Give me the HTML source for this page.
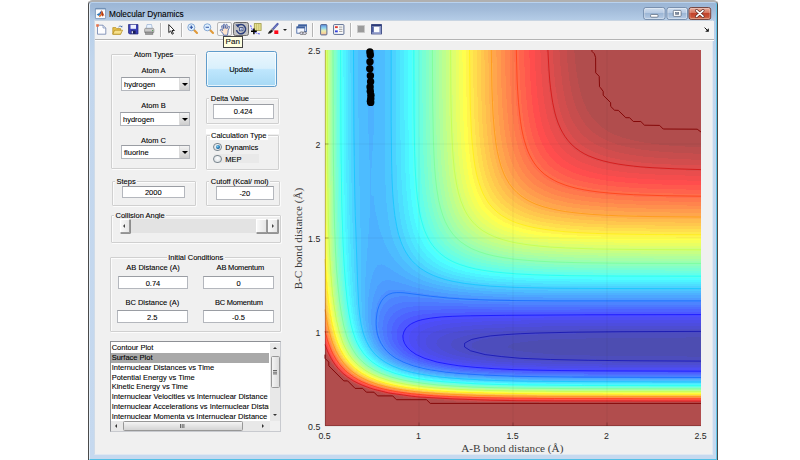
<!DOCTYPE html>
<html><head><meta charset="utf-8"><title>Molecular Dynamics</title>
<style>
html,body{margin:0;padding:0;background:#fff;}
body{width:800px;height:460px;position:relative;overflow:hidden;font-family:"Liberation Sans",sans-serif;font-size:7.5px;color:#000;-webkit-text-stroke:0.09px #000;}
*{box-sizing:border-box;}
.abs,.win *{position:absolute;}
.win{position:absolute;left:88px;top:0px;width:630px;height:461px;border-radius:4.5px 4.5px 0 0;background:linear-gradient(#9ab5d5 0,#a3bcda 8px,#b6cee8 19px,#c2d6ed 60px,#c6d9ef 100%);border:1px solid #4a4a4a;border-top:2px solid #b0b0b0;overflow:hidden;}
.win .glow{left:0;top:0;width:628px;height:458px;border-left:1px solid #e6f0fa;border-top:1px solid #b9d2ee;border-right:1px solid #62c6ea;border-bottom:1px solid #53c0e6;border-radius:3px 3px 0 0;}
.title{left:20px;top:7px;font-size:8.3px;line-height:10px;white-space:nowrap;color:#000;}
.client{left:5px;top:18.3px;width:619px;height:435px;background:#f0f0f0;border:1px solid #cfdbe8;border-top-color:#c9d5e2;border-bottom-color:#dfe8f2;border-right-color:#dfe8f2;}
.tbline{left:0;top:17.7px;width:619px;height:1px;background:#b4b4b4;}
.tbline2{left:0;top:18.7px;width:619px;height:1px;background:#fff;}
.lbl{white-space:nowrap;line-height:9px;height:9px;}
.c{text-align:center;}
.panel{border:1px solid #d0d0d0;box-shadow:0.7px 0.7px 0 #fff, inset 0.7px 0.7px 0 #fff;border-radius:1px;}
.ptitle{background:#f0f0f0;padding:0 1.5px;white-space:nowrap;line-height:9px;height:9px;}
.edit{background:#fff;border:1px solid #b4b7bd;border-top-color:#9a9da3;text-align:center;line-height:11px;}
.combo{background:#fff;border:1px solid #b4b7bd;border-top-color:#9a9da3;}
.combo .t{left:2px;top:2.5px;line-height:9px;}
.combo .b{right:0.3px;top:0.3px;bottom:0.3px;width:10px;background:linear-gradient(#f3f3f3,#e2e2e2 45%,#cdcdcd 100%);border-left:0.6px solid #dcdcdc;}
.combo .b:after{content:"";position:absolute;left:1.9px;top:4.9px;width:0;height:0;border-style:solid;border-width:3.2px 3px 0 3px;border-color:#000 transparent transparent transparent;}
.plot{position:absolute;}
.tick{white-space:nowrap;line-height:10px;font-size:8.8px;color:#262626;-webkit-text-stroke:0;}
.axl{font-family:"Liberation Serif",serif;font-size:11.2px;white-space:nowrap;line-height:13px;color:#3a3a3a;-webkit-text-stroke:0;}
.li{left:0px;white-space:nowrap;line-height:9.65px;height:9.65px;padding-left:1.2px;}
.sb{background:#e8e8e8;}
.thumb{background:linear-gradient(90deg,#f4f4f4,#dcdcdc);border:1px solid #979797;border-radius:1.5px;}
.thumbh{background:linear-gradient(#f4f4f4,#d4d4d4);border:1px solid #979797;border-radius:1.5px;}
svg{overflow:visible}
.pt{position:static !important;padding:0 1.5px;}
.btn{border:1px solid #5f9ccb;border-radius:2.5px;background:linear-gradient(#eaf6fd 0,#d9f0fc 48%,#bee6fd 52%,#a7d9f5 100%);box-shadow:inset 0 0 0 0.8px #fafdfe;}
.radio{border-radius:50%;border:0.9px solid #7b8790;background:radial-gradient(circle at 50% 40%,#fdfdfd 0,#e3e7ea 60%,#cfd5d9 100%);}
.rdot{left:1.7px;top:1.7px;width:3.8px;height:3.8px;border-radius:50%;background:radial-gradient(circle at 40% 35%,#7fd0f5 0,#1a6aa6 60%,#123c63 100%);}
.sbtn{background:linear-gradient(90deg,#f8f8f8,#e6e6e6);border:0.8px solid #9a9a9a;border-left-color:#fff;border-top-color:#fff;box-shadow:0.6px 0.6px 0 #555;}
.arl{left:2.6px;top:3.8px;width:0;height:0;border-style:solid;border-width:2.4px 2.8px 2.4px 0;border-color:transparent #444 transparent transparent;}
.arr{left:4.2px;top:3.8px;width:0;height:0;border-style:solid;border-width:2.4px 0 2.4px 2.8px;border-color:transparent transparent transparent #444;}
.list{background:#fff;border:1px solid #8e9095;border-bottom-color:#c8cacf;border-right-color:#c8cacf;overflow:hidden;}
.ar{border:2.3px solid transparent;}
.ar2{border:2.3px solid transparent;}

</style></head>
<body>
<div class="win">
<div class="glow"></div>
<svg class="abs" style="left:6.2px;top:5.7px" width="11" height="11" viewBox="0 0 11 11"><rect x="0.4" y="0.4" width="10.2" height="10.2" rx="0.6" fill="#fbfcfd" stroke="#6f8db3" stroke-width="0.8"/><path d="M0.4 0.9H10.6" stroke="#5f82ad" stroke-width="0.9"/><path d="M1.6 6.5L4.3 4.9 5.6 6.2 3.8 8Z" fill="#2f78b7"/><path d="M3.8 8L5.6 6.2 6.7 2.2 7.4 3.6 6.9 7.2 5.9 7.9 4.9 9.2Z" fill="#e3691f"/><path d="M6.7 2.2Q7.9 4.2 9.4 7.9L8.3 7.3 7.6 8.8 6.9 7.2Z" fill="#b23a16"/><path d="M4.3 4.9L6.7 2.2 5.6 6.2Z" fill="#3b4d8f"/></svg>
<div class="title">Molecular Dynamics</div>
<!-- caption buttons -->
<svg class="abs" style="left:553px;top:4px" width="72" height="16" viewBox="0 0 72 16">
<defs>
<linearGradient id="cb1" x1="0" y1="0" x2="0" y2="1"><stop offset="0" stop-color="#d3e0f0"/><stop offset="0.48" stop-color="#b4c8e2"/><stop offset="0.5" stop-color="#9db7d6"/><stop offset="1" stop-color="#b9cde6"/></linearGradient>
<linearGradient id="cb2" x1="0" y1="0" x2="0" y2="1"><stop offset="0" stop-color="#e9b3a3"/><stop offset="0.46" stop-color="#d5735c"/><stop offset="0.5" stop-color="#c2432b"/><stop offset="0.8" stop-color="#c9553a"/><stop offset="1" stop-color="#de8a66"/></linearGradient>
</defs>
<rect x="1.7" y="1.5" width="21.3" height="12" rx="2.2" fill="url(#cb1)" stroke="#6c84a5" stroke-width="0.9"/>
<rect x="2.6" y="2.4" width="19.5" height="10.2" rx="1.5" fill="none" stroke="#fff" stroke-opacity="0.55" stroke-width="0.7"/>
<rect x="25" y="1.5" width="20.5" height="12" rx="2.2" fill="url(#cb1)" stroke="#6c84a5" stroke-width="0.9"/>
<rect x="25.9" y="2.4" width="18.7" height="10.2" rx="1.5" fill="none" stroke="#fff" stroke-opacity="0.55" stroke-width="0.7"/>
<rect x="47" y="1.5" width="21.7" height="12" rx="2.2" fill="url(#cb2)" stroke="#6b3530" stroke-width="0.9"/>
<rect x="47.9" y="2.4" width="19.9" height="10.2" rx="1.5" fill="none" stroke="#fff" stroke-opacity="0.4" stroke-width="0.7"/>
<rect x="8.6" y="8.4" width="7.4" height="2.8" rx="0.9" fill="#fff" stroke="#4c5a70" stroke-width="0.7"/>
<rect x="31.3" y="4.4" width="7.8" height="6" rx="0.9" fill="#fff" stroke="#4c5a70" stroke-width="0.7"/>
<rect x="33.6" y="6.6" width="3.2" height="1.7" fill="#7c8aa0" stroke="#4c5a70" stroke-width="0.5"/>
<path d="M54.6 4.6L61 10.4M61 4.6L54.6 10.4" stroke="#5a2a24" stroke-width="3" stroke-linecap="round"/>
<path d="M54.6 4.6L61 10.4M61 4.6L54.6 10.4" stroke="#fff" stroke-width="1.7" stroke-linecap="round"/>
</svg>
<div class="client">
<div style="left:0;top:0;width:619px;height:17.7px;background:#f3f3f3"></div><div class="tbline"></div><div class="tbline2"></div>
<svg class="abs" style="left:1.2px;top:2.5px" width="11" height="11" viewBox="0 0 11 11"><path d="M1.5 1.2H7L9.8 4V10.2H1.5Z" fill="#fdfdff" stroke="#7b8cb3" stroke-width="0.9"/><path d="M7 1.2V4H9.8" fill="#dfe6f5" stroke="#7b8cb3" stroke-width="0.7"/><path d="M0.2 0.2h2.6v2.6h-2.6z" fill="#e8734a"/></svg>
<svg class="abs" style="left:16.8px;top:3.5px" width="11" height="10" viewBox="0 0 11 10"><path d="M0.8 9.2V2.6H3.8L4.8 3.6H8.6V9.2Z" fill="#e9c24b" stroke="#b18a1c" stroke-width="0.7"/><path d="M0.8 9.2L2.6 5.2H10.6L8.6 9.2Z" fill="#f7e08a" stroke="#b18a1c" stroke-width="0.7"/><path d="M6.5 2C7.5 0.8 9 0.8 9.8 1.8" fill="none" stroke="#3b62a8" stroke-width="0.8"/><path d="M10.4 0.6L10.2 2.6 8.6 1.8Z" fill="#3b62a8"/></svg>
<svg class="abs" style="left:33.05px;top:2.85px" width="10.5" height="10.5" viewBox="0 0 10.5 10.5"><path d="M0.5 0.5H10V10H1.5L0.5 9Z" fill="#3a3fb5" stroke="#23267a" stroke-width="0.7"/><rect x="2.5" y="0.8" width="5.5" height="4" fill="#eef0ff"/><rect x="3" y="6.6" width="4.6" height="3.2" fill="#1b1d55"/><rect x="3.6" y="7.2" width="1.4" height="2.2" fill="#dfe3ff"/></svg>
<svg class="abs" style="left:48.95px;top:2.8px" width="10.5" height="11" viewBox="0 0 10.5 11"><path d="M3 0.5H7.5L8.3 4.5H2.2Z" fill="#e9f3ff" stroke="#8aa5c9" stroke-width="0.6"/><path d="M0.6 5.5Q0.6 4.3 1.8 4.3H8.7Q9.9 4.3 9.9 5.5V8.4H0.6Z" fill="#c9c9c9" stroke="#777" stroke-width="0.6"/><rect x="1.6" y="8" width="7.3" height="2.4" fill="#9a9a9a" stroke="#666" stroke-width="0.5"/><rect x="8" y="6.2" width="1.1" height="0.9" fill="#3c9a3c"/></svg>
<div style="left:64.7px;top:1.7px;width:0.8px;height:14px;background:#b4b4b4;box-shadow:0.8px 0 0 #fff"></div>
<svg class="abs" style="left:73.3px;top:3.1px" width="7" height="11" viewBox="0 0 7 11"><path d="M0.8 0.6V8.6L2.7 6.9 4.1 10.2 5.4 9.6 4 6.5H6.4Z" fill="#fff" stroke="#111" stroke-width="0.9" stroke-linejoin="round"/></svg>
<div style="left:86px;top:1.7px;width:0.8px;height:14px;background:#b4b4b4;box-shadow:0.8px 0 0 #fff"></div>
<svg class="abs" style="left:92px;top:2.2px" width="11" height="11" viewBox="0 0 11 11"><path d="M6.3 6.3L10 10" stroke="#e09a3a" stroke-width="2.1" stroke-linecap="round"/><circle cx="4.3" cy="4.3" r="3.5" fill="#dff0ff" stroke="#7aa0d0" stroke-width="0.9"/><path d="M2.6 4.3H6" stroke="#2b4fa0" stroke-width="1.1"/><path d="M4.3 2.6V6" stroke="#2b4fa0" stroke-width="1.1"/></svg>
<svg class="abs" style="left:107.8px;top:2.2px" width="11" height="11" viewBox="0 0 11 11"><path d="M6.3 6.3L10 10" stroke="#e09a3a" stroke-width="2.1" stroke-linecap="round"/><circle cx="4.3" cy="4.3" r="3.5" fill="#dff0ff" stroke="#7aa0d0" stroke-width="0.9"/><path d="M2.6 4.3H6" stroke="#2b4fa0" stroke-width="1.1"/></svg>
<div style="left:122.2px;top:1.1px;width:14.6px;height:13.4px;border:0.8px solid #b9b9b9;border-radius:2px;background:#f6f6f6"></div>
<svg class="abs" style="left:123.7px;top:1.95px" width="12" height="12.5" viewBox="0 0 12 12.5"><path d="M4.6 12.2C4.2 10.4 3 9.2 1.6 8 0.6 7.1 1.4 6 2.5 6.7L3.6 7.6 2.6 3.6C2.3 2.5 3.6 2.1 3.9 3.2L4.6 5.6 4.4 1.8C4.4 0.7 5.8 0.7 5.8 1.8L6.2 5.4 6.9 2C7.1 0.9 8.5 1.2 8.3 2.3L7.8 5.8 9.3 3.6C9.9 2.7 11 3.4 10.5 4.3L9.2 7.2C9 9.2 8.8 10.6 8.4 12.2Z" fill="#fde3cb" stroke="#3457a6" stroke-width="0.75" stroke-linejoin="round"/></svg>
<div style="left:137.9px;top:1px;width:15.8px;height:13.6px;border:1px solid #6e6e6e;border-radius:2.5px;background:#c2c2c2"></div>
<svg class="abs" style="left:139.8px;top:1.6px" width="12" height="12" viewBox="0 0 12 12"><path d="M2.3 3.4A4.6 4.6 0 1 1 1.5 7.2" fill="none" stroke="#2b3f7c" stroke-width="1.5"/><path d="M0.3 1.6L4.1 1.3 3.4 5Z" fill="#2b3f7c"/><rect x="4.6" y="4.6" width="3.4" height="3.2" fill="#e8eefb" stroke="#2b3f7c" stroke-width="0.8"/><path d="M5.5 5.6H7.1V6.9H5.5Z" fill="#7f93c6"/></svg>
<svg class="abs" style="left:155px;top:1.7px" width="12" height="12" viewBox="0 0 12 12"><rect x="4.3" y="0.6" width="6.8" height="6.8" fill="#e6df8e" stroke="#9b9742" stroke-width="0.8"/><path d="M6.5 0.8V7.2M8.7 0.8V7.2" stroke="#b9b25e" stroke-width="0.6"/><path d="M0.7 2.4Q1.6 6.6 4 8.6T10.6 11" fill="none" stroke="#2424ee" stroke-width="0.9" stroke-dasharray="1.8 1.1"/><path d="M3.9 5.4V11.2M1 8.3H6.8" stroke="#000" stroke-width="1.5"/></svg>
<svg class="abs" style="left:171.6px;top:1.7px" width="12" height="12" viewBox="0 0 12 12"><path d="M10.6 1L5.6 6.6" stroke="#5560b0" stroke-width="2.2" stroke-linecap="round"/><path d="M9.9 1.9L6.4 5.8" stroke="#aab3e6" stroke-width="0.6" stroke-dasharray="0.8 0.8"/><path d="M5.9 6.1L4.3 7.9" stroke="#8d8d8d" stroke-width="2.4"/><path d="M4.9 7.1Q2.2 7.4 0.8 10.8Q4.2 10.9 5.8 8.2Z" fill="#1c1c1c"/><rect x="7.3" y="7.4" width="4" height="3.6" fill="#ff0818"/></svg>
<div style="left:188.3px;top:7.3px;border:2px solid transparent;border-top:2.4px solid #222;border-bottom:0"></div>
<div style="left:195.8px;top:1.7px;width:0.8px;height:14px;background:#b4b4b4;box-shadow:0.8px 0 0 #fff"></div>
<svg class="abs" style="left:200.85px;top:2.25px" width="11.5" height="11.5" viewBox="0 0 11.5 11.5"><rect x="2.6" y="0.8" width="8" height="6.6" fill="#f2f6ff" stroke="#3c5f9e" stroke-width="0.8"/><rect x="2.6" y="0.8" width="8" height="1.6" fill="#3c5f9e"/><rect x="0.8" y="2.8" width="8" height="6.4" fill="#f2f6ff" stroke="#3c5f9e" stroke-width="0.8"/><rect x="0.8" y="2.8" width="8" height="1.6" fill="#3c5f9e"/><ellipse cx="5.6" cy="9.2" rx="1.9" ry="1.3" fill="#dde" stroke="#555" stroke-width="0.7"/><ellipse cx="8.6" cy="9.2" rx="1.9" ry="1.3" fill="#dde" stroke="#555" stroke-width="0.7"/></svg>
<div style="left:217px;top:1.7px;width:0.8px;height:14px;background:#b4b4b4;box-shadow:0.8px 0 0 #fff"></div>
<svg class="abs" style="left:224.85px;top:2.25px" width="7.5" height="11.5" viewBox="0 0 7.5 11.5"><defs><linearGradient id="cbg" x1="0" y1="0" x2="0" y2="1"><stop offset="0" stop-color="#5d8be0"/><stop offset="0.35" stop-color="#8fd6ee"/><stop offset="0.6" stop-color="#e8eeb0"/><stop offset="0.8" stop-color="#f6d79a"/><stop offset="1" stop-color="#eeb9a6"/></linearGradient></defs><rect x="0.6" y="0.6" width="6.3" height="10.3" rx="0.8" fill="url(#cbg)" stroke="#4a5c86" stroke-width="0.9"/></svg>
<svg class="abs" style="left:238.45px;top:2.5px" width="11.5" height="11" viewBox="0 0 11.5 11"><rect x="0.6" y="0.6" width="10.3" height="9.8" rx="0.8" fill="#fbfbfb" stroke="#4a5c86" stroke-width="0.9"/><rect x="2" y="2.2" width="2.8" height="1.9" fill="#e03a30"/><rect x="2" y="6.4" width="2.8" height="1.9" fill="#3340d8"/><path d="M6 3.1H9.4M6 5.3H9.4M6 7.4H9.4" stroke="#777" stroke-width="0.7"/></svg>
<div style="left:255.3px;top:1.7px;width:0.8px;height:14px;background:#b4b4b4;box-shadow:0.8px 0 0 #fff"></div>
<svg class="abs" style="left:262px;top:4.1px" width="8" height="8" viewBox="0 0 8 8"><rect x="0.5" y="0.5" width="7" height="7" fill="#9b9b9b" stroke="#c8c8c8" stroke-width="0.8"/></svg>
<svg class="abs" style="left:276.1px;top:2.75px" width="11" height="10.5" viewBox="0 0 11 10.5"><rect x="0.6" y="0.6" width="9.8" height="9.3" fill="#fafcff" stroke="#2b3a78" stroke-width="0.9"/><rect x="0.6" y="0.6" width="9.8" height="1.9" fill="#2b3a78"/><rect x="1" y="2.5" width="1.8" height="7" fill="#4a5aa0"/><rect x="8.4" y="2.5" width="1.6" height="7" fill="#8a96c8"/><rect x="1" y="8.2" width="9" height="1.4" fill="#8a96c8"/></svg>
<svg class="abs" style="left:608.8px;top:6px" width="5" height="5" viewBox="0 0 5 5"><path d="M0.6 0.6L3.8 3.8" stroke="#111" stroke-width="1"/><path d="M4.8 1.2V4.8H1.2Z" fill="#111"/></svg>
<div style="left:128.1px;top:14.9px;width:19.6px;height:11.8px;background:#ffffe1;border:0.9px solid #444;z-index:5"></div>
<div class="lbl" style="left:130.6px;top:15.9px;font-size:8px;line-height:10px;z-index:6;color:#111">Pan</div>
<div class="panel" style="left:16.3px;top:32.5px;width:84.7px;height:115.4px;"></div><div class="lbl c" style="left:16.3px;top:28.5px;width:84.7px;"><span class="pt" style="background:#f0f0f0">Atom Types</span></div>
<div class="lbl c" style="left:13.5px;top:45px;width:90px;">Atom A</div>
<div class="combo" style="left:26px;top:55.7px;width:69px;height:14.3px;"><div class="t">hydrogen</div><div class="b"></div></div>
<div class="lbl c" style="left:13.5px;top:79.5px;width:90px;">Atom B</div>
<div class="combo" style="left:25px;top:90.7px;width:70px;height:14.3px;"><div class="t">hydrogen</div><div class="b"></div></div>
<div class="lbl c" style="left:13.5px;top:115px;width:90px;">Atom C</div>
<div class="combo" style="left:26px;top:123.7px;width:69px;height:14.5px;"><div class="t">fluorine</div><div class="b"></div></div>
<div class="btn" style="left:110.5px;top:29.7px;width:71.5px;height:36px;"><div class="lbl c" style="left:0;top:12.9px;width:100%">Update</div></div>
<div class="panel" style="left:111.3px;top:76.7px;width:72.5px;height:25.8px;"></div><div class="lbl" style="left:114.25px;top:72.7px;"><span class="pt" style="background:#f0f0f0">Delta Value</span></div>
<div class="edit" style="left:117.5px;top:82.5px;width:61.3px;height:15px;line-height:14.2px">0.424</div>
<div class="" style="left:111px;top:107.5px;width:73.3px;height:5.7px;background:#fff"></div>
<div class="panel" style="left:111.3px;top:113.5px;width:72.7px;height:35px;"></div><div class="lbl" style="left:114.5px;top:109.5px;"><span class="pt" style="background:#fff">Calculation Type</span></div>
<div class="radio" style="left:118.4px;top:121.4px;width:8.2px;height:8.2px"><div class="rdot"></div></div>
<div class="lbl" style="left:130.3px;top:121.8px;">Dynamics</div>
<div class="" style="left:118.8px;top:132.7px;width:45px;height:9.3px;background:#e9e9e9"></div>
<div class="radio" style="left:118.4px;top:133.8px;width:8.2px;height:8.2px"></div>
<div class="lbl" style="left:130.3px;top:134.2px;">MEP</div>
<div class="panel" style="left:16.8px;top:160px;width:84px;height:24.7px;"></div><div class="lbl" style="left:20px;top:156px;"><span class="pt" style="background:#f0f0f0">Steps</span></div>
<div class="edit" style="left:27px;top:165px;width:62.5px;height:12px;line-height:11.2px">2000</div>
<div class="panel" style="left:110.5px;top:160px;width:74.5px;height:25px;"></div><div class="lbl" style="left:114.25px;top:156px;"><span class="pt" style="background:#f0f0f0">Cutoff (Kcal/ mol)</span></div>
<div class="edit" style="left:120.8px;top:164.5px;width:58px;height:14.2px;line-height:13.4px">-20</div>
<div class="panel" style="left:15.5px;top:193.7px;width:170px;height:28px;"></div><div class="lbl" style="left:19px;top:189.7px;"><span class="pt" style="background:#f0f0f0">Collision Angle</span></div>
<div class="" style="left:24.5px;top:198.2px;width:158.5px;height:13.5px;background:#e3e3e3"></div>
<div class="sbtn" style="left:24.5px;top:198.2px;width:10.3px;height:13.5px;"><div class="arl"></div></div>
<div class="sbtn" style="left:172.3px;top:198.2px;width:10.7px;height:13.5px;"><div class="arr"></div></div>
<div class="sbtn" style="left:161.3px;top:198.2px;width:11px;height:13.5px;"></div>
<div class="panel" style="left:15px;top:235.7px;width:171.3px;height:75px;"></div><div class="lbl c" style="left:15px;top:231.7px;width:171.3px;"><span class="pt" style="background:#f0f0f0">Initial Conditions</span></div>
<div class="lbl c" style="left:13px;top:242px;width:90px;">AB Distance (A)</div>
<div class="lbl c" style="left:100.3px;top:242px;width:90px;letter-spacing:-0.2px">AB Momentum</div>
<div class="edit" style="left:23px;top:255px;width:70px;height:12.5px;line-height:13.9px">0.74</div>
<div class="edit" style="left:108.3px;top:255px;width:70.5px;height:12.5px;line-height:13.9px">0</div>
<div class="lbl c" style="left:12.3px;top:277px;width:90px;">BC Distance (A)</div>
<div class="lbl c" style="left:98.8px;top:277px;width:90px;letter-spacing:-0.2px">BC Momentum</div>
<div class="edit" style="left:22px;top:288.7px;width:70.5px;height:13px;line-height:13.4px">2.5</div>
<div class="edit" style="left:108.3px;top:288.7px;width:70.5px;height:13px;line-height:13.4px">-0.5</div>
<div class="list" style="left:14.5px;top:320px;width:171px;height:90.7px;"><div class="li" style="top:1.2px;width:158px;overflow:hidden;">Contour Plot</div><div class="li" style="top:10.95px;width:158px;overflow:hidden;background:#a9a9a9;">Surface Plot</div><div class="li" style="top:20.7px;width:158px;overflow:hidden;">Internuclear Distances vs Time</div><div class="li" style="top:30.45px;width:158px;overflow:hidden;">Potential Energy vs Time</div><div class="li" style="top:40.2px;width:158px;overflow:hidden;">Kinetic Energy vs Time</div><div class="li" style="top:49.95px;width:158px;overflow:hidden;">Internuclear Velocities vs Internuclear Distance</div><div class="li" style="top:59.7px;width:158px;overflow:hidden;">Internuclear Accelerations vs Internuclear Distance</div><div class="li" style="top:69.45px;width:158px;overflow:hidden;">Internuclear Momenta vs Internuclear Distance</div><div class="sb" style="left:159.2px;top:0.5px;width:10.8px;height:78px"></div><div class="ar" style="left:162.4px;top:5px;border-bottom:2.6px solid #333;border-top:0"></div><div class="ar" style="left:162.4px;top:72px;border-top:2.6px solid #333;border-bottom:0"></div><div class="thumb" style="left:160px;top:13.5px;width:9.5px;height:32.5px"></div><div style="left:162.8px;top:27.5px;width:4px;height:0.8px;background:#666;box-shadow:0 1.7px 0 #666,0 3.4px 0 #666"></div><div class="sb" style="left:0.5px;top:78.3px;width:158.7px;height:11px"></div><div style="left:159.2px;top:78.3px;width:10.8px;height:11px;background:#f0f0f0"></div><div class="ar2" style="left:4.5px;top:81.3px;border-right:2.6px solid #333;border-left:0"></div><div class="ar2" style="left:151.5px;top:81.3px;border-left:2.6px solid #333;border-right:0"></div><div class="thumbh" style="left:12px;top:79px;width:120px;height:9.8px"></div><div style="left:69.8px;top:82px;width:0.8px;height:4px;background:#666;box-shadow:1.7px 0 0 #666,3.4px 0 0 #666"></div></div>
</div>
</div>
<svg class="plot" style="left:324.5px;top:50.0px" width="376" height="376" viewBox="0 0 376 376">
<g shape-rendering="crispEdges">
<rect x="0" y="0" width="376" height="376" fill="#4d4db1"/>
<path d="M0.9 376.0L376.0 376.0L376.0 306.6L289.5 306.0L255.7 305.3L230.5 304.6L210.6 302.9L191.4 300.8L181.8 297.0L188.3 293.3L205.9 291.1L225.2 289.5L251.9 288.7L282.0 288.1L376.0 287.4L376.0 0.0L0.0 0.0L0.0 376.0L0.9 376.0Z" fill="#4d4dbc"/>
<path d="M0.9 376.0L376.0 376.0L376.0 310.2L270.7 309.5L233.1 308.8L210.6 308.0L188.0 306.4L169.8 304.6L153.1 300.8L146.6 297.0L147.3 293.3L151.3 291.5L156.6 289.5L172.0 287.1L188.0 285.6L218.1 284.3L255.7 283.4L304.6 282.9L376.0 282.6L376.0 0.0L0.0 0.0L0.0 376.0L0.9 376.0Z" fill="#4d4dc7"/>
<path d="M0.9 376.0L376.0 376.0L376.0 312.9L297.0 312.6L245.8 312.1L206.8 310.9L188.0 309.9L173.0 308.8L165.4 308.1L150.4 305.8L143.5 304.6L139.1 303.2L132.1 300.8L126.8 297.0L125.8 293.3L129.4 289.5L135.4 287.2L140.1 285.8L148.5 284.3L157.9 283.1L175.8 281.6L206.8 280.3L244.4 279.6L297.0 279.1L376.0 278.8L376.0 0.0L0.0 0.0L0.0 376.0L0.9 376.0Z" fill="#4d4dd2"/>
<path d="M0.9 376.0L376.0 376.0L376.0 315.0L297.0 314.7L244.4 314.2L203.0 313.2L184.2 312.4L173.0 311.7L157.9 310.2L143.1 308.3L126.9 304.6L117.9 300.8L113.0 297.0L111.3 293.3L112.6 289.5L114.7 287.8L117.7 285.8L124.1 283.5L129.6 282.0L139.1 280.5L150.4 279.2L161.7 278.3L191.8 277.0L233.1 276.2L289.5 275.8L376.0 275.5L376.0 0.0L0.0 0.0L0.0 376.0L0.9 376.0Z" fill="#4d4dde"/>
<path d="M0.9 376.0L376.0 376.0L376.0 316.9L282.0 316.6L221.8 315.9L188.0 314.7L157.9 312.7L146.6 311.5L127.8 308.4L114.7 304.6L107.1 300.8L102.6 297.0L100.5 293.3L100.6 289.5L103.1 285.8L105.3 284.2L109.1 282.0L116.6 279.6L122.5 278.2L133.5 276.7L146.6 275.5L173.0 274.2L218.1 273.2L282.0 272.7L376.0 272.5L376.0 0.0L0.0 0.0L0.0 376.0L0.9 376.0Z" fill="#4d4de9"/>
<path d="M0.9 376.0L376.0 376.0L376.0 318.5L282.0 318.2L221.8 317.5L199.3 316.9L176.7 316.1L165.4 315.4L150.4 314.1L133.6 312.1L124.1 310.2L115.7 308.3L105.1 304.6L98.4 300.8L94.2 297.0L92.0 293.3L91.3 289.5L92.5 285.8L94.9 282.8L95.7 282.0L97.8 280.7L102.5 278.2L109.0 276.2L116.6 274.6L124.7 273.5L136.3 272.5L165.4 271.1L206.8 270.3L274.5 269.9L376.0 269.6L376.0 0.0L0.0 0.0L0.0 376.0L0.9 376.0Z" fill="#4d4df4"/>
<path d="M0.9 376.0L376.0 376.0L376.0 320.0L278.2 319.8L225.6 319.2L180.5 317.8L161.7 316.8L148.2 315.8L135.4 314.3L121.0 312.1L106.4 308.3L101.5 306.4L97.3 304.6L91.2 300.8L90.2 299.9L87.3 297.0L84.9 293.3L83.8 289.5L84.1 285.8L85.8 282.0L89.5 278.2L94.0 275.7L97.8 274.1L105.3 272.2L113.9 270.7L124.1 269.7L135.4 269.0L150.4 268.4L191.8 267.7L263.2 267.2L376.0 266.9L376.0 0.0L0.0 0.0L0.0 376.0L0.9 376.0Z" fill="#4d4dff"/>
<path d="M0.9 376.0L376.0 376.0L376.0 321.3L267.0 321.0L203.0 320.1L184.3 319.6L165.4 318.6L146.6 317.3L132.4 315.8L120.3 313.9L111.2 312.1L98.8 308.3L90.6 304.6L85.1 300.8L81.3 297.0L78.8 293.3L77.6 289.5L77.3 285.8L78.1 282.0L80.1 278.2L84.1 274.5L87.4 272.5L91.6 270.7L97.8 269.0L105.3 267.7L116.6 266.6L139.1 265.6L180.5 265.0L259.4 264.5L376.0 264.3L376.0 0.0L0.0 0.0L0.0 376.0L0.9 376.0Z" fill="#4d58ff"/>
<path d="M0.9 376.0L376.0 376.0L376.0 322.6L270.7 322.3L206.8 321.5L180.5 320.7L157.9 319.7L146.6 318.8L131.6 317.3L120.3 315.8L103.1 312.1L92.3 308.3L86.5 305.4L84.9 304.6L79.7 300.8L76.1 297.0L73.7 293.3L72.2 289.5L71.5 285.8L71.7 282.0L72.8 278.2L75.0 274.5L79.0 270.7L84.1 267.9L86.5 266.9L90.2 265.8L97.8 264.4L105.3 263.6L122.2 262.7L150.4 262.4L376.0 261.8L376.0 0.0L0.0 0.0L0.0 376.0L0.9 376.0Z" fill="#4d63ff"/>
<path d="M0.9 376.0L376.0 376.0L376.0 323.8L259.4 323.5L203.0 322.7L176.7 321.9L154.2 320.7L138.7 319.6L124.1 317.8L111.4 315.8L96.3 312.1L86.6 308.3L79.8 304.6L75.0 300.8L71.5 297.0L69.1 293.3L67.4 289.5L66.6 285.8L66.4 282.0L66.8 278.2L67.7 275.2L68.5 273.5L70.2 270.7L71.4 269.2L75.2 266.0L79.0 263.9L83.8 262.3L90.2 260.9L97.8 260.1L109.0 259.6L124.1 259.4L199.3 259.6L376.0 259.3L376.0 0.0L0.0 0.0L0.0 376.0L0.9 376.0Z" fill="#4d6eff"/>
<path d="M0.9 376.0L376.0 376.0L376.0 324.8L263.2 324.5L195.5 323.7L176.7 323.1L157.9 322.2L139.1 320.9L124.1 319.3L105.3 316.2L97.8 314.3L90.2 312.0L81.6 308.3L79.0 306.8L75.3 304.6L71.4 301.4L67.4 297.0L65.0 293.3L63.3 289.5L62.2 285.8L61.7 282.0L61.7 278.2L62.0 276.2L62.3 274.5L63.5 270.7L65.5 267.0L68.7 263.2L72.4 260.6L75.2 259.2L77.1 258.5L82.7 257.1L90.2 256.2L105.3 255.9L154.2 256.7L199.3 257.1L376.0 257.0L376.0 0.0L0.0 0.0L0.0 376.0L0.9 376.0Z" fill="#4d79ff"/>
<path d="M0.9 376.0L376.0 376.0L376.0 325.9L259.4 325.5L191.8 324.6L154.2 323.2L135.4 321.8L116.1 319.6L105.3 317.6L97.0 315.8L86.5 312.5L77.2 308.3L71.3 304.6L66.9 300.8L63.7 297.0L61.3 293.3L59.5 289.5L58.4 285.8L57.7 282.0L57.4 278.2L57.8 272.6L59.1 267.0L60.8 263.2L63.9 258.8L67.7 255.7L71.4 253.9L75.2 252.8L79.0 252.1L82.7 251.8L94.0 251.7L140.1 253.6L184.2 254.5L240.6 254.7L376.0 254.6L376.0 0.0L0.0 0.0L0.0 376.0L0.9 376.0Z" fill="#4d84ff"/>
<path d="M0.9 376.0L376.0 376.0L376.0 326.9L255.7 326.6L218.1 326.2L188.0 325.6L161.7 324.6L139.5 323.4L124.1 321.8L107.9 319.6L91.3 315.8L82.7 312.9L79.0 311.3L73.1 308.3L67.6 304.6L63.4 300.8L60.3 297.0L57.9 293.3L56.4 290.1L54.9 285.8L54.0 282.0L53.5 278.2L53.4 274.5L53.6 270.7L54.1 267.0L55.2 262.3L56.2 259.4L57.1 257.6L60.2 252.9L63.9 249.6L67.7 247.8L71.4 246.8L75.2 246.4L79.0 246.3L86.5 246.7L113.1 249.1L131.6 250.4L150.4 251.2L171.1 251.7L233.1 252.3L376.0 252.3L376.0 0.0L0.0 0.0L0.0 376.0L0.9 376.0Z" fill="#4d8fff"/>
<path d="M0.9 376.0L376.0 376.0L376.0 327.8L248.2 327.5L213.1 327.1L184.2 326.5L154.2 325.3L131.6 323.8L116.6 322.1L101.5 319.7L86.5 315.9L79.0 313.1L76.4 312.1L69.4 308.3L63.9 304.3L60.2 300.8L57.2 297.0L54.9 293.3L53.0 289.5L51.7 285.8L50.8 282.0L50.1 278.2L49.7 270.7L50.2 263.2L51.1 258.5L52.6 252.8L54.9 248.2L56.4 245.6L60.2 242.1L63.9 240.3L67.7 239.6L71.4 239.5L75.2 239.8L103.4 244.4L120.3 246.4L139.1 247.9L161.7 248.9L188.0 249.6L225.6 249.9L376.0 250.0L376.0 0.0L0.0 0.0L0.0 376.0L0.9 376.0Z" fill="#4d9bff"/>
<path d="M0.9 376.0L376.0 376.0L376.0 328.7L248.2 328.3L206.8 327.9L176.7 327.2L154.2 326.3L131.6 324.7L117.3 323.4L101.5 320.9L95.0 319.6L86.5 317.3L81.7 315.8L75.2 313.2L72.6 312.1L66.1 308.3L60.2 303.7L57.3 300.8L54.3 297.0L52.0 293.3L50.2 289.5L48.8 285.8L47.0 278.2L46.5 274.5L46.1 267.0L46.5 259.4L47.3 252.9L48.9 245.3L50.2 241.6L52.6 236.1L54.3 234.1L56.4 231.9L60.2 230.3L63.9 230.1L67.7 230.7L91.7 237.8L100.6 239.9L109.0 241.5L117.5 242.8L127.8 244.1L150.4 245.8L180.5 247.0L218.1 247.5L376.0 247.7L376.0 0.0L0.0 0.0L0.0 376.0L0.9 376.0Z" fill="#4da6ff"/>
<path d="M0.9 376.0L376.0 376.0L376.0 329.5L244.4 329.2L203.0 328.7L173.0 328.0L150.4 327.1L127.8 325.4L109.3 323.4L94.0 320.5L89.7 319.6L79.0 316.3L69.2 312.1L62.9 308.3L58.2 304.6L54.5 300.8L51.6 297.0L49.3 293.3L47.6 289.5L45.0 282.0L44.2 278.2L43.2 270.7L42.8 259.4L43.4 248.2L44.6 237.8L45.9 231.2L47.9 223.7L48.9 220.8L50.8 217.8L52.6 215.3L56.4 214.4L60.2 215.7L73.3 224.0L80.8 228.2L87.4 231.2L93.1 233.4L102.5 236.2L112.8 238.6L124.1 240.5L137.2 242.0L150.4 243.1L165.4 243.9L184.2 244.6L206.8 245.0L263.2 245.4L376.0 245.5L376.0 0.0L0.0 0.0L0.0 376.0L0.9 376.0Z" fill="#4db1ff"/>
<path d="M0.9 376.0L376.0 376.0L376.0 330.4L270.7 330.2L206.8 329.6L161.7 328.4L139.1 327.3L127.8 326.4L112.8 324.8L102.5 323.4L86.5 320.0L79.0 317.6L71.4 314.8L65.9 312.1L63.9 310.8L60.0 308.3L56.4 305.3L51.9 300.8L49.1 297.0L46.9 293.3L45.1 289.5L42.5 282.0L41.4 276.9L40.4 270.7L39.6 259.4L39.5 248.2L40.0 235.9L41.4 212.2L44.1 176.7L44.8 161.7L45.1 146.6L45.0 131.6L44.6 112.8L41.4 27.5L41.1 0.0L0.0 0.0L0.0 376.0L0.9 376.0ZM199.3 242.5L259.4 243.1L376.0 243.2L376.0 0.0L49.8 0.0L48.9 78.1L45.7 131.6L45.5 139.1L45.6 141.9L46.0 143.8L46.5 144.8L47.7 145.7L48.9 146.2L49.4 154.2L50.4 161.7L51.2 165.4L52.6 170.2L53.9 176.7L55.0 180.5L59.1 191.8L62.1 198.3L65.3 204.0L69.6 210.0L73.3 214.3L77.2 218.1L81.9 221.8L87.8 225.6L93.3 228.4L99.6 231.0L107.2 233.5L114.7 235.4L123.1 237.1L131.6 238.4L142.9 239.7L167.3 241.5L199.3 242.5Z" fill="#4dbcff"/>
<path d="M0.9 376.0L376.0 376.0L376.0 331.2L263.2 331.0L206.8 330.4L161.7 329.3L142.9 328.4L124.9 327.1L109.0 325.3L97.8 323.6L90.2 322.0L80.8 319.6L70.4 315.8L63.9 312.6L57.3 308.3L53.0 304.6L49.5 300.8L46.8 297.0L44.6 293.3L41.3 285.8L40.2 282.0L38.5 274.5L37.4 267.0L36.8 259.4L36.2 244.4L35.7 185.2L33.8 107.4L33.0 0.0L0.0 0.0L0.0 376.0L0.9 376.0ZM228.4 240.6L282.0 240.9L376.0 241.0L376.0 0.0L59.8 0.0L59.7 71.4L59.8 105.3L60.5 135.4L61.6 154.2L63.4 169.2L64.7 176.7L66.4 184.2L68.7 191.8L70.1 195.5L73.3 202.1L76.1 206.8L79.7 211.5L83.7 215.7L88.4 219.7L93.1 222.8L98.0 225.6L105.3 228.8L112.7 231.2L120.3 233.2L128.8 234.9L139.1 236.5L150.4 237.7L161.7 238.6L191.8 240.0L228.4 240.6Z" fill="#4dc7ff"/>
<path d="M0.9 376.0L376.0 376.0L376.0 331.9L267.0 331.7L203.0 331.2L161.7 330.1L142.9 329.2L127.8 328.2L115.9 327.1L97.8 324.5L90.2 323.1L79.0 320.2L75.2 319.0L67.7 316.0L63.9 314.1L60.1 312.1L54.8 308.3L52.6 306.4L50.6 304.6L47.3 300.8L44.6 297.0L41.4 291.1L39.2 285.8L37.6 280.5L36.2 274.5L35.0 267.0L33.8 255.7L32.9 236.9L30.1 146.6L29.2 82.7L28.7 0.0L0.0 0.0L0.0 376.0L0.9 376.0ZM201.2 237.8L259.4 238.6L376.0 238.7L376.0 0.0L65.8 0.0L65.8 63.9L66.0 101.5L66.6 127.8L67.6 146.6L68.5 157.9L69.4 165.4L70.6 173.0L72.2 180.5L73.6 186.1L75.5 191.8L77.5 196.5L80.3 202.1L83.4 206.8L86.4 210.6L90.0 214.3L94.6 218.1L100.4 221.8L105.3 224.4L110.9 226.7L117.5 228.9L124.1 230.7L131.6 232.3L139.1 233.5L150.4 234.9L173.0 236.7L201.2 237.8Z" fill="#4dd2ff"/>
<path d="M0.9 376.0L376.0 376.0L376.0 332.6L270.7 332.4L206.8 331.9L160.1 330.9L131.6 329.3L108.4 327.1L94.0 324.8L86.6 323.4L82.7 322.4L73.4 319.6L64.2 315.8L57.5 312.1L52.4 308.3L48.3 304.6L45.1 300.8L42.5 297.0L40.4 293.3L37.6 286.9L36.0 282.0L33.8 273.1L32.3 263.2L31.2 251.9L30.1 236.2L28.8 206.8L27.5 173.0L26.6 139.1L25.8 82.7L25.4 0.0L0.0 0.0L0.0 376.0L0.9 376.0ZM223.7 236.0L278.2 236.4L376.0 236.5L376.0 0.0L70.8 0.0L70.8 60.2L71.1 97.8L71.8 127.8L73.1 149.5L74.9 165.4L76.1 173.0L77.8 180.5L79.9 187.6L81.4 191.8L84.5 198.3L87.3 203.0L90.0 206.8L93.3 210.6L97.4 214.3L102.6 218.1L109.0 221.7L113.7 223.7L120.3 226.1L127.8 228.2L135.4 229.9L144.8 231.4L154.2 232.6L165.4 233.6L191.8 235.1L223.7 236.0Z" fill="#4ddeff"/>
<path d="M0.9 376.0L376.0 376.0L376.0 333.3L270.7 333.1L210.6 332.7L161.7 331.6L143.1 330.9L131.6 330.1L116.6 328.8L101.9 327.1L90.2 325.0L82.3 323.4L70.1 319.6L61.5 315.8L55.1 312.1L50.1 308.3L46.2 304.6L43.1 300.8L41.4 298.3L38.4 293.3L35.3 285.8L33.0 278.2L31.4 270.7L30.1 262.3L29.0 251.9L27.8 236.9L26.3 213.7L25.1 184.2L24.2 154.2L23.2 90.2L22.7 0.0L0.0 0.0L0.0 376.0L0.9 376.0ZM262.3 234.1L376.0 234.3L376.0 0.0L75.2 0.0L75.3 63.9L75.6 101.5L76.4 127.8L77.9 150.4L79.2 161.7L80.4 169.2L82.0 176.7L84.1 184.2L86.1 189.9L88.7 195.5L91.4 200.2L94.8 204.9L98.7 209.2L102.5 212.6L107.2 215.9L112.8 219.1L118.9 221.8L126.9 224.5L134.6 226.5L142.9 228.2L150.4 229.4L161.7 230.7L173.0 231.6L188.0 232.5L218.1 233.5L262.3 234.1Z" fill="#4de9ff"/>
<path d="M0.9 376.0L376.0 376.0L376.0 334.1L270.7 333.9L206.8 333.4L161.7 332.3L142.9 331.6L127.8 330.7L112.8 329.2L97.8 327.3L90.2 326.0L78.5 323.4L67.0 319.6L60.2 316.5L52.7 312.1L48.0 308.3L44.2 304.6L41.1 300.8L38.7 297.0L36.6 293.3L33.4 285.8L31.2 278.2L29.5 270.7L27.8 259.4L26.3 246.3L24.8 225.6L23.5 203.0L22.6 182.3L21.9 157.9L20.9 94.0L20.5 0.0L0.0 0.0L0.0 376.0L0.9 376.0ZM221.8 231.2L274.5 231.9L376.0 232.0L376.0 0.0L79.3 0.0L79.4 56.4L79.7 94.0L80.4 120.3L81.6 142.9L83.7 161.7L85.1 169.2L86.8 176.7L88.7 183.3L90.5 188.0L92.1 191.8L95.2 197.4L99.2 203.0L102.7 206.8L106.9 210.6L110.9 213.4L115.6 216.2L120.3 218.5L127.8 221.3L133.5 223.0L142.9 225.2L150.4 226.5L169.2 228.7L191.8 230.2L221.8 231.2Z" fill="#4df4ff"/>
<path d="M0.9 376.0L376.0 376.0L376.0 334.7L267.0 334.6L203.0 334.0L157.9 332.9L139.1 332.1L121.0 330.9L105.3 329.2L94.0 327.6L86.5 326.1L74.9 323.4L64.2 319.6L56.4 315.8L50.6 312.1L46.0 308.3L41.4 303.4L36.9 297.0L33.2 289.5L30.5 282.0L28.6 274.5L26.5 263.2L23.9 240.6L22.6 223.8L21.4 203.0L20.3 176.7L19.6 150.4L18.8 97.8L18.4 0.0L0.0 0.0L0.0 376.0L0.9 376.0ZM249.1 229.4L297.0 229.7L376.0 229.8L376.0 0.0L83.1 0.0L83.3 60.2L83.7 97.8L84.5 124.1L86.0 145.7L88.1 161.7L89.5 169.2L91.4 176.7L93.2 182.4L95.4 188.0L98.7 194.3L102.0 199.3L105.2 203.0L109.0 206.8L113.9 210.6L120.3 214.3L126.0 216.9L131.6 219.0L139.1 221.2L146.3 222.8L154.2 224.2L163.6 225.5L184.2 227.3L210.6 228.6L249.1 229.4Z" fill="#4dffff"/>
<path d="M0.9 376.0L376.0 376.0L376.0 335.4L263.2 335.2L197.8 334.6L154.2 333.5L135.4 332.6L120.3 331.5L105.3 330.0L90.2 327.8L82.7 326.2L71.6 323.4L61.5 319.6L54.2 315.8L48.5 312.1L44.1 308.3L40.5 304.6L37.6 300.8L35.2 297.0L33.2 293.3L30.1 285.8L26.9 274.5L25.4 267.0L23.7 255.7L22.1 240.6L20.6 221.8L19.3 199.3L18.6 184.2L17.9 157.9L17.0 97.8L16.6 0.0L0.0 0.0L0.0 376.0L0.9 376.0ZM345.0 227.5L376.0 227.5L376.0 0.0L86.8 0.0L87.0 63.9L87.6 101.5L88.6 127.8L89.4 139.1L90.6 150.4L92.2 161.7L93.8 169.2L95.8 176.7L98.6 184.2L101.5 190.3L104.7 195.5L108.1 199.8L112.8 204.5L116.6 207.5L122.2 211.0L128.8 214.2L135.4 216.7L142.9 218.9L152.2 220.9L161.7 222.5L173.0 223.8L184.2 224.8L197.6 225.6L229.4 226.7L274.5 227.3L345.0 227.5Z" fill="#58fff4"/>
<path d="M0.9 376.0L376.0 376.0L376.0 336.0L259.4 335.7L195.5 335.2L154.2 334.2L135.4 333.3L120.3 332.2L106.0 330.9L90.2 328.5L82.6 327.1L68.6 323.4L59.0 319.6L52.6 316.2L46.5 312.1L42.2 308.3L37.6 303.1L33.5 297.0L29.9 289.5L27.3 282.0L26.2 278.2L24.6 270.7L22.6 259.4L21.2 248.2L19.7 233.1L18.8 221.5L17.6 199.3L16.7 176.7L16.0 150.4L15.2 90.2L14.9 0.0L0.0 0.0L0.0 376.0L0.9 376.0ZM247.2 224.7L297.0 225.1L376.0 225.2L376.0 0.0L90.4 0.0L90.6 56.4L91.0 90.2L91.8 116.6L93.2 139.1L94.5 150.4L95.6 157.9L97.1 165.4L98.7 171.7L100.6 177.7L103.2 184.2L105.1 188.0L108.1 192.7L111.7 197.4L115.4 201.2L119.4 204.5L124.1 207.7L129.4 210.6L135.4 213.1L142.9 215.6L150.4 217.5L157.9 219.0L167.3 220.4L176.7 221.5L188.0 222.5L214.3 223.9L247.2 224.7Z" fill="#63ffe9"/>
<path d="M0.9 376.0L376.0 376.0L376.0 336.6L263.2 336.4L199.3 335.9L150.4 334.7L120.3 332.9L105.3 331.5L94.0 330.0L79.0 327.1L71.4 325.1L65.8 323.4L56.4 319.5L48.9 315.2L44.6 312.1L41.4 309.2L37.1 304.6L34.3 300.8L30.1 293.4L28.4 289.5L25.8 282.0L23.9 274.5L22.3 267.0L20.6 255.7L18.8 240.8L17.3 221.8L16.0 199.3L14.9 173.0L13.8 109.0L13.4 0.0L0.0 0.0L0.0 376.0L0.9 376.0ZM298.0 222.8L376.0 222.9L376.0 0.0L93.9 0.0L94.1 56.4L94.6 94.0L95.6 120.3L96.3 131.6L97.4 142.9L98.7 152.6L100.2 160.7L101.9 168.3L103.6 173.9L106.2 180.5L109.0 186.1L112.6 191.8L115.6 195.5L119.4 199.3L124.1 203.0L130.2 206.8L135.4 209.3L142.9 212.1L150.4 214.3L157.9 216.0L167.3 217.6L176.7 218.8L188.0 219.9L214.3 221.4L248.2 222.3L298.0 222.8Z" fill="#6effde"/>
<path d="M0.9 376.0L376.0 376.0L376.0 337.2L263.2 337.0L199.3 336.5L150.4 335.3L135.3 334.6L120.3 333.6L105.3 332.2L94.8 330.9L82.7 328.7L75.4 327.1L71.4 326.0L63.1 323.4L54.4 319.6L47.9 315.8L41.4 310.8L37.6 307.0L35.5 304.6L32.8 300.8L30.1 296.2L27.0 289.5L24.4 282.0L22.4 274.5L20.2 263.2L18.8 253.7L16.7 233.1L15.0 211.4L13.4 169.2L12.3 105.3L11.9 0.0L0.0 0.0L0.0 376.0L0.9 376.0ZM250.0 220.0L297.0 220.4L376.0 220.6L376.0 0.0L97.3 0.0L97.5 52.6L97.9 87.4L98.8 112.8L100.3 135.4L102.2 150.4L103.5 157.9L105.3 165.4L107.2 171.6L109.0 176.7L112.2 183.3L115.1 188.0L117.9 191.8L121.4 195.5L125.7 199.3L131.2 203.0L137.2 206.2L142.9 208.6L148.7 210.6L155.1 212.3L162.6 213.9L171.1 215.3L180.5 216.5L191.8 217.6L218.1 219.1L250.0 220.0Z" fill="#79ffd2"/>
<path d="M0.9 376.0L376.0 376.0L376.0 337.8L267.0 337.6L203.0 337.1L157.9 336.2L124.1 334.6L105.3 332.8L90.2 330.9L82.7 329.5L72.2 327.1L60.6 323.4L52.6 319.8L46.0 315.8L41.1 312.1L37.2 308.3L33.8 304.4L30.1 298.8L26.3 291.3L24.2 285.8L22.0 278.2L19.5 267.0L17.7 255.7L15.6 236.9L14.3 221.8L12.9 195.5L11.9 169.2L11.3 139.7L10.9 109.0L10.5 0.0L0.0 0.0L0.0 376.0L0.9 376.0ZM295.2 218.1L376.0 218.3L376.0 0.0L100.7 0.0L100.9 52.6L101.5 90.2L102.5 116.6L103.3 127.8L104.4 139.1L105.8 149.5L107.3 157.0L109.0 164.3L110.9 170.1L113.5 176.7L115.9 181.4L119.6 187.1L123.1 191.4L127.4 195.5L132.4 199.3L138.2 202.7L142.9 204.8L150.4 207.6L157.4 209.6L165.4 211.4L173.0 212.7L181.4 213.9L191.8 214.9L218.1 216.6L251.9 217.6L295.2 218.1Z" fill="#84ffc7"/>
<path d="M0.9 376.0L376.0 376.0L376.0 338.4L263.2 338.2L199.3 337.7L150.4 336.5L131.6 335.6L116.6 334.6L101.5 333.1L86.5 331.0L79.0 329.5L69.2 327.1L58.2 323.4L50.3 319.6L44.2 315.8L39.5 312.1L35.6 308.3L33.8 306.2L30.1 301.1L26.3 294.3L24.3 289.5L21.7 282.0L18.9 270.7L17.0 259.4L15.4 248.2L13.9 233.1L12.3 210.6L11.3 190.7L10.6 169.2L9.7 105.3L9.3 0.0L0.0 0.0L0.0 376.0L0.9 376.0ZM257.6 215.3L304.6 215.7L376.0 215.9L376.0 0.0L104.0 0.0L104.2 52.6L104.8 86.5L105.8 112.8L107.2 131.6L108.4 141.9L109.6 149.5L111.2 157.0L112.6 162.6L114.8 169.2L116.6 173.6L120.1 180.5L122.6 184.2L125.6 188.0L129.3 191.8L133.8 195.5L139.1 198.9L144.8 201.8L150.4 204.1L157.9 206.5L162.8 207.7L169.2 209.1L178.6 210.7L188.0 211.8L199.3 212.9L225.6 214.4L257.6 215.3Z" fill="#8fffbc"/>
<path d="M0.9 376.0L376.0 376.0L376.0 338.9L259.4 338.7L195.5 338.2L169.2 337.7L146.6 336.9L127.8 336.0L112.8 334.9L97.8 333.3L82.7 331.0L75.2 329.4L66.4 327.1L55.9 323.4L48.9 319.9L42.5 315.8L37.9 312.1L34.1 308.3L30.1 303.1L26.4 297.0L23.0 289.5L20.5 282.0L18.5 274.5L16.3 263.2L14.6 251.9L12.6 233.1L11.3 215.6L10.3 195.5L9.4 169.2L8.4 105.3L8.0 0.0L0.0 0.0L0.0 376.0L0.9 376.0ZM312.1 213.4L376.0 213.5L376.0 0.0L107.3 0.0L107.6 52.6L108.1 86.5L109.2 112.8L110.1 124.1L111.2 135.4L112.9 146.6L114.4 154.2L116.4 161.7L118.4 167.3L120.8 173.0L124.1 179.0L127.8 184.2L131.2 188.0L135.4 191.8L140.8 195.5L146.6 198.7L151.3 200.7L157.9 203.1L165.4 205.2L173.1 206.8L184.2 208.6L203.2 210.6L229.4 212.0L263.2 212.9L312.1 213.4Z" fill="#9bffb1"/>
<path d="M0.9 376.0L376.0 376.0L376.0 339.4L255.7 339.2L188.0 338.6L146.6 337.5L127.8 336.6L112.8 335.5L97.8 334.0L82.7 331.7L75.2 330.2L63.8 327.1L53.8 323.4L46.5 319.6L40.8 315.8L36.4 312.1L32.7 308.3L29.7 304.6L27.2 300.8L25.1 297.0L21.8 289.5L18.8 280.5L16.5 270.7L15.0 263.2L13.0 248.2L11.3 232.0L10.1 214.3L8.9 191.8L8.1 165.4L7.2 105.3L6.9 0.0L0.0 0.0L0.0 376.0L0.9 376.0ZM269.8 210.6L312.1 211.0L376.0 211.1L376.0 0.0L110.6 0.0L110.9 48.9L111.4 82.7L112.5 109.0L114.0 127.8L115.3 138.2L116.6 146.0L118.4 154.2L119.7 158.9L121.9 165.4L124.1 170.4L127.5 176.7L130.2 180.5L133.3 184.2L137.2 188.0L142.1 191.8L146.7 194.6L151.3 196.9L157.9 199.5L165.4 201.9L173.0 203.7L180.5 205.1L191.8 206.7L210.6 208.4L236.9 209.8L269.8 210.6Z" fill="#a6ffa6"/>
<path d="M0.9 376.0L376.0 376.0L376.0 339.9L259.4 339.7L191.8 339.2L150.4 338.3L131.6 337.4L112.8 336.1L97.7 334.6L82.7 332.3L75.0 330.9L61.3 327.1L51.8 323.4L45.1 319.8L39.3 315.8L34.9 312.1L30.1 306.8L25.9 300.8L22.1 293.3L19.2 285.8L17.1 278.2L15.0 269.4L13.3 259.4L11.3 243.9L9.7 225.6L8.5 206.8L7.5 186.1L7.0 165.4L6.1 101.5L5.8 0.0L0.0 0.0L0.0 376.0L0.9 376.0ZM254.7 207.7L300.8 208.4L376.0 208.7L376.0 0.0L113.9 0.0L114.1 45.1L114.7 79.0L115.7 105.3L117.2 124.1L119.1 139.1L120.5 146.6L122.3 154.2L124.1 159.8L126.3 165.4L128.5 170.1L131.9 175.8L135.5 180.5L139.1 184.2L142.9 187.4L146.6 190.1L150.4 192.3L157.2 195.5L162.3 197.4L169.2 199.5L176.7 201.3L184.2 202.7L191.8 203.8L203.0 205.1L225.6 206.7L254.7 207.7Z" fill="#b1ff9b"/>
<path d="M0.9 376.0L376.0 376.0L376.0 340.4L259.4 340.3L191.8 339.7L142.9 338.5L127.8 337.8L112.8 336.7L94.0 334.8L82.7 333.0L72.0 330.9L60.2 327.5L49.9 323.4L45.1 320.8L43.0 319.6L37.7 315.8L33.8 312.5L30.0 308.3L27.1 304.6L24.7 300.8L22.6 296.9L18.8 287.9L15.9 278.2L14.2 270.7L11.6 255.7L10.3 244.4L8.9 229.4L7.5 210.5L6.6 188.0L5.9 165.4L5.1 101.5L4.7 0.0L0.0 0.0L0.0 376.0L0.9 376.0ZM295.2 205.9L376.0 206.2L376.0 0.0L117.2 0.0L117.5 48.9L118.2 82.7L119.4 109.0L121.2 127.8L122.2 135.4L123.8 143.8L125.3 150.4L127.6 157.9L130.3 164.5L132.7 169.2L135.4 173.5L139.1 178.3L142.9 182.1L146.6 185.2L150.6 188.0L157.6 191.8L163.6 194.2L169.2 196.1L176.7 198.1L184.2 199.6L191.8 200.8L203.0 202.3L225.6 204.0L255.7 205.2L295.2 205.9Z" fill="#bcff8f"/>
<path d="M0.9 376.0L376.0 376.0L376.0 341.0L259.4 340.8L195.5 340.3L150.4 339.3L128.7 338.4L116.6 337.6L101.5 336.2L88.5 334.6L79.0 333.0L67.7 330.5L56.7 327.1L48.0 323.4L41.4 319.6L36.2 315.8L33.8 313.7L30.1 309.9L25.9 304.6L21.5 297.0L18.3 289.5L15.0 279.1L13.1 270.7L11.1 259.4L9.2 244.4L7.5 226.6L6.5 210.6L5.5 188.0L4.9 165.4L4.0 101.5L3.7 0.0L0.0 0.0L0.0 376.0L0.9 376.0ZM275.4 203.1L315.8 203.5L376.0 203.7L376.0 0.0L120.5 0.0L120.8 45.1L121.4 79.0L122.7 105.3L124.3 124.1L125.4 131.6L126.9 140.1L128.3 146.6L130.6 154.2L132.7 159.8L135.3 165.4L137.6 169.2L140.2 173.0L143.3 176.7L147.2 180.5L152.1 184.2L157.0 187.2L161.7 189.5L167.2 191.8L173.0 193.6L180.5 195.6L188.0 197.2L199.3 198.9L218.1 200.8L244.4 202.2L275.4 203.1Z" fill="#c7ff84"/>
<path d="M0.9 376.0L376.0 376.0L376.0 341.5L263.2 341.3L199.3 340.8L150.4 339.8L131.6 339.1L116.6 338.2L101.5 336.8L86.5 334.9L75.2 332.9L66.4 330.9L54.7 327.1L46.2 323.4L39.8 319.6L33.8 315.0L30.1 311.3L27.5 308.3L24.7 304.6L22.3 300.8L20.4 297.0L17.2 289.5L14.8 282.0L11.3 267.0L9.6 255.7L7.7 240.6L6.5 225.6L5.3 206.8L4.4 184.2L3.8 162.7L3.1 101.5L2.8 0.0L0.0 0.0L0.0 376.0L0.9 376.0ZM266.0 200.2L308.3 200.9L376.0 201.1L376.0 0.0L123.8 0.0L124.1 45.1L124.7 75.2L125.9 101.5L127.5 120.3L128.5 127.8L130.0 136.3L131.4 142.9L133.5 150.4L135.6 156.0L138.1 161.7L140.2 165.4L142.6 169.2L145.6 173.0L149.3 176.7L153.8 180.5L157.9 183.2L161.7 185.3L167.5 188.0L173.0 190.0L180.5 192.2L188.0 193.9L195.5 195.3L214.3 197.6L236.9 199.2L266.0 200.2Z" fill="#d2ff79"/>
<path d="M0.9 376.0L376.0 376.0L376.0 342.0L259.4 341.8L195.5 341.3L146.6 340.2L127.8 339.4L112.5 338.4L97.8 336.9L82.7 334.9L75.2 333.5L63.8 330.9L52.6 327.1L45.1 323.7L38.3 319.6L33.4 315.8L29.5 312.1L26.2 308.3L23.5 304.6L19.3 297.0L16.2 289.5L13.8 282.0L11.1 270.7L9.1 259.4L7.2 244.4L5.8 229.4L4.7 214.3L3.4 184.2L2.7 154.2L2.2 116.6L1.8 0.0L0.0 0.0L0.0 376.0L0.9 376.0ZM321.5 198.3L376.0 198.5L376.0 0.0L127.2 0.0L127.5 45.1L128.3 79.0L129.7 105.3L131.7 124.1L132.9 131.6L135.0 141.0L136.5 146.6L139.2 154.2L142.9 161.7L145.2 165.4L148.0 169.2L151.5 173.0L155.7 176.7L161.1 180.5L165.4 182.9L171.1 185.5L176.7 187.6L184.2 189.7L191.8 191.4L201.2 193.0L210.6 194.3L221.8 195.4L244.4 196.8L278.2 197.8L321.5 198.3Z" fill="#deff6e"/>
<path d="M0.9 376.0L376.0 376.0L376.0 342.4L251.9 342.3L191.8 341.8L142.9 340.6L124.1 339.7L109.0 338.6L94.0 337.1L79.0 334.9L71.4 333.4L61.5 330.9L50.7 327.1L42.9 323.4L36.9 319.6L32.1 315.8L28.3 312.1L26.3 309.8L22.4 304.6L18.2 297.0L15.0 289.3L11.8 278.2L10.1 270.7L7.6 255.7L5.8 240.6L3.7 214.3L2.9 195.5L2.2 173.0L1.3 109.0L0.9 0.0L0.0 0.0L0.0 376.0L0.9 376.0ZM303.6 195.5L376.0 195.9L376.0 0.0L130.6 0.0L130.9 45.1L131.6 75.2L133.0 101.5L135.0 120.3L136.1 127.8L137.9 136.3L139.6 142.9L142.2 150.4L143.8 154.2L146.8 159.8L150.4 165.2L153.2 168.6L157.7 173.0L161.7 176.0L165.8 178.6L171.3 181.4L177.7 184.0L184.2 186.1L191.8 188.1L199.3 189.5L207.5 190.8L218.1 192.1L240.6 193.8L267.0 194.8L303.6 195.5Z" fill="#e9ff63"/>
<path d="M0.9 376.0L376.0 376.0L376.0 342.9L251.9 342.7L184.2 342.2L142.9 341.1L124.1 340.2L109.0 339.1L94.0 337.6L79.0 335.5L71.4 334.0L59.2 330.9L48.9 327.1L41.4 323.4L35.5 319.6L30.8 315.8L26.3 311.2L23.9 308.3L21.3 304.6L19.1 300.8L17.2 297.0L14.2 289.5L11.3 280.1L8.4 267.0L6.7 255.7L4.5 236.9L3.3 221.8L2.3 203.0L1.0 157.9L0.3 97.8L0.0 0.0L0.0 376.0L0.9 376.0ZM297.0 192.7L376.0 193.2L376.0 0.0L134.0 0.0L134.4 45.1L135.1 75.2L136.4 97.8L138.2 116.6L139.4 124.1L140.8 131.6L142.7 139.1L144.9 145.7L146.7 150.4L150.1 157.0L153.2 161.7L155.5 164.5L160.0 169.2L163.6 172.1L169.0 175.8L173.0 177.9L178.8 180.5L184.2 182.4L191.8 184.6L199.3 186.2L214.3 188.6L225.6 189.8L236.9 190.7L263.2 191.9L297.0 192.7Z" fill="#f4ff58"/>
<path d="M0.9 376.0L376.0 376.0L376.0 343.3L267.0 343.2L203.0 342.8L160.8 342.2L127.8 340.9L109.0 339.6L95.5 338.4L86.5 337.2L75.2 335.4L67.7 333.8L57.0 330.9L48.9 327.8L45.1 326.2L39.8 323.4L33.8 319.4L29.6 315.8L25.9 312.1L22.8 308.3L18.8 302.1L16.2 297.0L13.2 289.5L10.8 282.0L8.2 270.7L6.9 263.2L5.3 251.9L3.6 236.9L2.2 218.1L1.3 199.3L0.0 155.5L0.0 376.0L0.9 376.0ZM295.2 189.9L376.0 190.5L376.0 0.0L137.4 0.0L137.8 41.4L138.5 71.4L139.7 94.0L141.6 112.8L142.7 120.3L144.1 127.8L145.9 135.4L148.3 142.9L150.4 148.1L153.5 154.2L156.0 157.9L158.9 161.7L162.4 165.4L166.8 169.2L172.4 173.0L176.7 175.3L180.5 177.0L188.0 179.8L195.5 181.9L202.0 183.3L210.6 184.8L218.1 185.9L229.4 187.1L240.6 188.0L263.2 189.1L295.2 189.9Z" fill="#ffff4d"/>
<path d="M0.9 376.0L376.0 376.0L376.0 343.8L210.6 343.3L165.4 342.7L135.4 341.8L105.3 339.8L91.0 338.4L82.7 337.2L71.4 335.2L63.9 333.5L55.0 330.9L48.9 328.6L45.1 327.0L37.6 322.9L32.8 319.6L28.4 315.8L26.3 313.8L21.7 308.3L18.8 303.9L15.2 297.0L12.3 289.5L10.0 282.0L7.5 271.8L5.4 259.4L3.9 248.2L1.6 221.8L0.0 189.5L0.0 376.0L0.9 376.0ZM296.1 187.1L376.0 187.7L376.0 0.0L140.9 0.0L141.3 37.6L142.0 67.7L143.2 90.2L145.0 109.0L147.4 124.1L149.1 131.6L151.5 139.1L154.2 145.8L156.5 150.4L158.8 154.2L161.7 158.1L164.9 161.7L169.2 165.5L174.3 169.2L178.6 171.6L184.2 174.3L190.8 176.7L203.0 180.0L210.6 181.5L220.9 183.0L240.6 184.9L265.1 186.2L296.1 187.1Z" fill="#fff44d"/>
<path d="M0.9 376.0L376.0 376.0L376.0 344.2L214.3 343.8L169.2 343.2L135.4 342.2L109.0 340.6L86.9 338.4L75.2 336.5L66.1 334.6L53.0 330.9L45.1 327.7L41.4 325.8L36.9 323.4L30.1 318.4L26.3 315.0L23.7 312.1L20.7 308.3L18.2 304.6L14.3 297.0L11.3 289.5L9.1 282.0L7.2 274.5L5.1 263.2L3.8 254.0L2.3 240.6L1.0 225.6L0.0 209.2L0.0 376.0L0.9 376.0ZM300.8 184.2L376.0 184.8L376.0 0.0L144.5 0.0L144.9 37.6L145.7 67.7L146.9 90.2L148.9 109.0L150.0 116.6L151.6 124.1L154.7 135.4L157.7 142.9L159.6 146.6L161.8 150.4L165.4 155.4L169.2 159.5L173.0 162.8L176.7 165.6L183.0 169.2L188.0 171.5L192.7 173.3L199.3 175.3L206.8 177.2L214.3 178.6L225.6 180.3L244.4 182.1L270.7 183.5L300.8 184.2Z" fill="#ffe94d"/>
<path d="M0.9 376.0L376.0 376.0L376.0 344.7L214.3 344.3L169.2 343.7L135.4 342.7L124.0 342.2L109.0 341.1L94.0 339.7L83.2 338.4L75.2 337.0L63.9 334.7L52.6 331.4L48.9 330.0L41.4 326.7L35.6 323.4L30.3 319.6L26.0 315.8L22.5 312.1L18.8 307.0L15.0 300.6L11.8 293.3L9.3 285.8L7.5 279.5L5.6 270.7L3.8 260.0L2.7 251.9L1.1 236.9L0.0 223.0L0.0 376.0L0.9 376.0ZM310.2 181.4L376.0 181.9L376.0 0.0L148.1 0.0L148.5 37.6L149.4 67.7L150.8 90.2L152.9 109.0L154.2 116.6L155.9 124.1L157.9 131.3L159.4 135.4L161.7 140.7L164.9 146.6L167.4 150.4L170.5 154.2L174.3 157.9L178.9 161.7L184.2 165.0L188.0 167.0L193.1 169.2L199.3 171.3L206.8 173.4L214.3 175.0L229.4 177.4L240.6 178.5L251.9 179.4L278.2 180.7L310.2 181.4Z" fill="#ffde4d"/>
<path d="M0.9 376.0L376.0 376.0L376.0 345.1L218.1 344.7L176.7 344.2L142.9 343.4L116.2 342.2L94.0 340.2L79.0 338.3L67.7 336.1L60.2 334.3L48.9 330.7L40.7 327.1L34.2 323.4L29.1 319.6L25.0 315.8L21.5 312.1L18.7 308.3L16.3 304.6L14.2 300.8L10.9 293.3L8.4 285.8L6.4 278.2L4.1 267.0L2.9 259.4L1.5 248.2L0.0 233.7L0.0 376.0L0.9 376.0ZM326.2 178.6L376.0 178.9L376.0 0.0L151.8 0.0L152.2 37.6L153.2 67.7L154.7 90.2L155.9 101.5L157.1 109.0L158.5 116.6L160.3 124.1L162.1 129.7L164.3 135.4L166.5 140.1L169.9 145.7L173.5 150.4L176.7 153.8L180.5 157.1L185.2 160.4L189.9 163.1L195.5 165.7L201.2 167.8L206.8 169.5L214.3 171.3L222.8 172.9L240.6 175.2L263.2 176.9L289.5 177.9L326.2 178.6Z" fill="#ffd24d"/>
<path d="M0.9 376.0L376.0 376.0L376.0 345.5L218.1 345.2L176.7 344.7L142.9 343.8L112.8 342.4L94.0 340.7L76.6 338.4L67.7 336.7L59.1 334.6L48.9 331.4L45.1 329.8L39.3 327.1L33.8 323.9L27.9 319.6L23.9 315.8L20.5 312.1L17.7 308.3L15.0 304.0L11.6 297.0L7.5 285.7L4.7 274.5L3.3 267.0L1.6 255.7L0.0 242.2L0.0 376.0L0.9 376.0ZM356.3 175.8L376.0 175.9L376.0 0.0L155.5 0.0L156.0 37.6L157.1 67.7L158.7 90.2L160.1 101.5L161.3 109.0L162.9 116.6L165.0 124.1L167.3 130.6L169.4 135.4L172.6 141.0L175.2 144.8L178.6 148.8L182.2 152.3L187.0 156.0L191.8 159.0L197.1 161.7L203.0 164.1L210.6 166.4L218.1 168.3L225.6 169.7L233.1 170.9L253.2 173.0L278.2 174.4L312.1 175.3L356.3 175.8Z" fill="#ffc74d"/>
<path d="M0.9 376.0L376.0 376.0L376.0 346.0L221.8 345.6L180.5 345.2L146.6 344.4L120.3 343.3L97.8 341.6L86.5 340.3L75.2 338.7L60.2 335.5L52.6 333.3L45.9 330.9L37.8 327.1L33.8 324.7L31.7 323.4L26.8 319.6L22.8 315.8L19.5 312.1L16.8 308.3L14.4 304.6L11.3 298.3L9.2 293.3L6.7 285.8L4.8 278.2L3.2 270.7L1.3 259.4L0.0 249.4L0.0 376.0L0.9 376.0ZM307.4 172.0L376.0 172.8L376.0 0.0L159.4 0.0L159.8 33.8L160.7 60.2L161.8 79.0L163.8 97.8L165.0 105.3L166.6 112.8L169.9 124.1L173.0 131.6L174.9 135.4L177.2 139.1L180.5 143.5L184.2 147.5L188.0 150.8L192.7 154.2L197.7 157.0L203.0 159.5L209.0 161.7L214.3 163.3L221.8 165.1L236.9 167.7L255.7 169.7L278.2 171.1L307.4 172.0Z" fill="#ffbc4d"/>
<path d="M0.9 376.0L376.0 376.0L376.0 346.4L218.1 346.0L180.5 345.6L146.6 344.8L120.3 343.7L97.8 342.1L86.5 340.8L75.2 339.2L67.7 337.8L60.2 336.0L55.0 334.6L45.1 331.2L36.5 327.1L30.5 323.4L26.3 320.1L21.8 315.8L18.5 312.1L15.0 307.0L11.6 300.8L8.4 293.3L7.1 289.5L4.9 282.0L3.2 274.5L0.0 255.5L0.0 376.0L0.9 376.0ZM333.7 169.2L376.0 169.5L376.0 0.0L163.3 0.0L163.9 37.6L164.9 63.9L166.4 83.7L167.7 94.0L168.8 101.5L170.4 109.0L172.4 116.6L174.3 122.2L176.6 127.8L180.8 135.4L184.2 140.1L188.0 144.2L191.8 147.5L195.8 150.4L202.3 154.2L206.8 156.2L211.3 157.9L218.1 160.0L225.6 161.9L233.1 163.3L248.2 165.4L270.7 167.3L297.0 168.4L333.7 169.2Z" fill="#ffb14d"/>
<path d="M0.9 376.0L376.0 376.0L376.0 346.7L221.8 346.4L176.7 346.0L150.4 345.4L120.3 344.1L97.8 342.5L79.0 340.2L68.1 338.4L63.9 337.5L53.1 334.6L48.9 333.2L42.8 330.9L35.2 327.1L30.1 323.9L26.3 321.0L22.6 317.6L18.8 313.5L15.0 308.5L12.7 304.6L10.7 300.8L7.5 293.1L3.8 280.5L1.7 270.7L0.0 260.8L0.0 376.0L0.9 376.0ZM312.1 165.5L376.0 166.2L376.0 0.0L167.3 0.0L167.8 30.1L168.7 56.4L169.9 75.2L171.1 86.5L172.1 94.0L173.5 101.5L175.2 109.0L176.7 114.4L178.8 120.3L180.9 125.0L184.2 131.2L187.1 135.4L189.5 138.2L192.7 141.5L196.5 144.7L199.3 146.8L205.4 150.4L210.6 152.8L215.3 154.6L221.8 156.7L229.4 158.5L244.4 161.2L263.2 163.2L285.8 164.6L312.1 165.5Z" fill="#ffa64d"/>
<path d="M0.9 376.0L376.0 376.0L376.0 347.1L229.4 346.9L188.0 346.5L154.0 345.9L124.1 344.8L101.5 343.3L90.2 342.2L82.7 341.3L65.6 338.4L51.2 334.6L41.3 330.9L33.9 327.1L28.2 323.4L23.6 319.6L19.8 315.8L15.0 309.7L11.8 304.6L7.5 295.2L5.6 289.5L3.4 282.0L0.0 265.5L0.0 376.0L0.9 376.0ZM351.6 162.6L376.0 162.8L376.0 0.0L171.4 0.0L172.0 33.8L173.2 60.2L174.0 71.4L175.2 82.7L177.5 97.8L180.5 109.9L182.8 116.6L185.2 122.1L188.0 127.3L191.0 131.6L194.1 135.4L197.9 139.1L202.7 142.9L206.8 145.5L210.6 147.5L217.2 150.4L221.8 152.0L229.4 154.2L236.9 155.8L244.4 157.2L251.9 158.2L263.2 159.4L285.8 161.0L312.1 162.0L351.6 162.6Z" fill="#ff9b4d"/>
<path d="M0.9 376.0L376.0 376.0L376.0 347.5L221.8 347.2L180.5 346.8L146.6 346.1L120.3 345.0L97.8 343.4L82.7 341.7L63.9 338.5L49.5 334.6L41.4 331.5L37.6 329.8L32.7 327.1L27.1 323.4L22.5 319.6L18.8 315.8L15.8 312.1L13.2 308.3L11.0 304.6L7.5 297.0L3.6 285.8L1.8 278.2L0.0 269.6L0.0 376.0L0.9 376.0ZM335.6 158.9L376.0 159.3L376.0 0.0L175.6 0.0L176.3 33.8L177.4 56.4L178.9 75.2L181.0 90.2L182.4 97.8L184.2 104.9L185.5 109.0L188.0 115.6L190.3 120.3L192.4 124.1L195.5 128.6L199.3 132.9L203.0 136.4L206.8 139.3L212.6 142.9L217.1 145.1L221.8 147.1L229.4 149.5L241.6 152.4L248.2 153.6L257.6 154.9L278.2 156.8L301.7 158.0L335.6 158.9Z" fill="#ff8f4d"/>
<path d="M0.9 376.0L376.0 376.0L376.0 347.9L221.8 347.6L180.5 347.2L146.6 346.5L120.3 345.4L97.8 343.8L82.3 342.2L63.9 339.0L56.4 337.2L48.9 335.0L37.6 330.5L31.5 327.1L26.3 323.6L21.6 319.6L18.8 316.8L15.0 312.3L12.4 308.3L10.2 304.6L7.5 299.0L3.8 288.7L2.0 282.0L0.0 273.4L0.0 376.0L0.9 376.0ZM331.8 155.1L376.0 155.7L376.0 0.0L180.0 0.0L180.6 30.1L181.7 52.6L183.2 71.4L185.3 86.5L188.0 99.2L189.8 105.3L191.8 110.6L194.5 116.6L196.7 120.3L199.3 124.2L203.0 128.7L206.8 132.3L210.6 135.4L215.3 138.3L220.0 140.8L225.6 143.2L231.2 145.2L236.9 146.8L244.4 148.5L259.4 151.0L278.2 152.9L300.8 154.2L331.8 155.1Z" fill="#ff844d"/>
<path d="M0.9 376.0L376.0 376.0L376.0 348.3L225.6 348.0L184.2 347.6L150.4 347.0L121.5 345.9L101.5 344.6L79.0 342.2L67.7 340.2L58.9 338.4L52.6 336.7L46.2 334.6L37.6 331.1L30.1 327.0L24.9 323.4L20.6 319.6L17.1 315.8L14.1 312.1L11.3 307.9L7.5 300.8L3.3 289.5L0.0 276.7L0.0 376.0L0.9 376.0ZM334.6 151.4L376.0 151.9L376.0 0.0L184.5 0.0L185.2 30.1L186.4 52.6L188.1 71.4L190.4 86.5L193.1 97.8L195.5 105.1L197.2 109.0L199.3 113.4L203.0 119.4L206.7 124.1L208.5 126.0L210.6 128.0L215.1 131.6L221.1 135.4L225.6 137.6L229.4 139.2L236.9 141.8L248.2 144.6L263.2 147.1L282.0 149.1L304.6 150.4L334.6 151.4Z" fill="#ff794d"/>
<path d="M0.9 376.0L376.0 376.0L376.0 348.6L229.4 348.4L188.0 348.0L154.2 347.4L127.8 346.6L109.0 345.6L86.5 343.5L71.4 341.4L56.9 338.4L44.6 334.6L37.6 331.7L33.8 329.8L29.2 327.1L22.6 322.2L18.8 318.7L15.0 314.5L11.3 309.2L8.6 304.6L6.8 300.8L3.8 293.3L0.0 279.8L0.0 376.0L0.9 376.0ZM344.0 147.6L376.0 148.0L376.0 0.0L189.2 0.0L190.0 30.1L191.2 52.6L192.7 67.8L193.7 75.2L195.2 83.7L196.7 90.2L198.9 97.8L200.6 102.5L203.0 107.9L205.8 112.8L208.3 116.6L211.4 120.3L214.3 123.3L218.1 126.5L221.8 129.2L225.9 131.6L232.2 134.6L236.9 136.4L244.4 138.8L255.7 141.3L270.7 143.7L289.5 145.4L312.1 146.7L344.0 147.6Z" fill="#ff6e4d"/>
<path d="M0.9 376.0L376.0 376.0L376.0 349.0L233.1 348.8L191.8 348.5L157.9 347.9L131.6 347.1L108.1 345.9L86.5 343.9L71.4 341.9L54.9 338.4L43.1 334.6L33.8 330.5L28.1 327.1L22.9 323.4L18.7 319.6L15.0 315.6L11.3 310.4L7.9 304.6L3.8 295.1L0.0 282.7L0.0 376.0L0.9 376.0ZM363.8 143.8L376.0 144.0L376.0 0.0L194.0 0.0L194.7 26.3L196.0 48.9L198.0 67.7L199.1 75.2L200.6 82.7L203.7 94.0L206.7 101.5L208.5 105.3L210.7 109.0L214.3 114.1L218.1 118.3L220.9 120.9L225.0 124.1L229.4 126.9L233.1 128.9L239.4 131.6L244.4 133.3L251.9 135.5L259.4 137.1L267.0 138.5L282.9 140.5L304.6 142.1L330.9 143.2L363.8 143.8Z" fill="#ff634d"/>
<path d="M0.9 376.0L376.0 376.0L376.0 349.4L229.4 349.1L188.0 348.8L154.2 348.2L127.8 347.3L102.6 345.9L86.5 344.3L70.4 342.2L60.2 340.1L53.1 338.4L41.6 334.6L33.8 331.1L30.1 329.0L27.0 327.1L21.9 323.4L17.8 319.6L14.4 315.8L11.6 312.1L9.2 308.3L7.1 304.6L3.8 297.0L0.0 285.3L0.0 376.0L0.9 376.0ZM340.3 139.1L376.0 139.8L376.0 0.0L199.0 0.0L199.8 26.3L201.0 45.1L202.6 61.1L204.8 75.2L207.6 86.5L210.2 94.0L211.8 97.8L213.7 101.5L216.2 105.7L218.5 109.0L222.6 113.7L225.6 116.6L229.4 119.5L236.9 124.1L241.6 126.3L247.2 128.5L251.9 130.0L259.4 131.9L274.5 134.7L293.3 136.8L315.8 138.3L340.3 139.1Z" fill="#ff584d"/>
<path d="M0.9 376.0L376.0 376.0L376.0 349.8L229.4 349.5L188.0 349.2L154.2 348.6L124.1 347.5L100.6 346.2L82.7 344.3L67.8 342.2L51.7 338.5L40.2 334.6L33.8 331.7L30.1 329.7L25.9 327.1L21.0 323.4L17.0 319.6L13.6 315.8L10.8 312.1L8.4 308.3L6.4 304.6L3.8 298.7L0.0 287.7L0.0 376.0L0.9 376.0ZM376.0 135.4L376.0 0.0L204.2 0.0L205.2 26.3L206.8 48.9L208.7 63.9L210.1 71.4L211.6 78.0L213.5 84.6L215.6 90.2L217.2 94.0L219.7 98.7L221.8 102.2L225.6 107.1L229.4 111.0L233.1 114.1L236.9 116.8L241.6 119.5L246.3 121.8L251.9 124.0L264.1 127.5L278.2 130.1L293.3 132.0L315.8 133.7L342.2 134.7L376.0 135.4Z" fill="#ff4d4d"/>
<path d="M0.9 376.0L376.0 376.0L376.0 350.2L229.4 349.9L184.2 349.5L154.2 348.9L124.1 347.9L98.7 346.4L82.7 344.7L69.6 342.9L63.9 341.9L52.6 339.2L48.9 338.2L41.4 335.6L37.6 334.1L31.0 330.9L26.3 328.1L22.6 325.4L20.0 323.4L16.1 319.6L12.8 315.8L10.1 312.1L7.5 308.0L3.9 300.8L0.0 289.9L0.0 376.0L0.9 376.0ZM369.4 130.7L376.0 130.8L376.0 0.0L209.7 0.0L210.7 26.3L212.2 45.1L214.3 61.1L215.6 67.7L217.4 75.2L219.0 80.6L221.2 86.5L222.9 90.2L225.6 95.2L230.3 101.8L233.5 105.3L237.7 109.0L241.6 111.8L245.3 114.1L250.1 116.6L255.7 118.9L259.8 120.3L267.0 122.3L274.5 124.1L282.0 125.4L297.0 127.3L315.8 128.8L338.4 129.9L369.4 130.7Z" fill="#f44d4d"/>
<path d="M0.9 376.0L376.0 376.0L376.0 350.6L225.6 350.4L189.9 350.0L157.9 349.4L127.8 348.5L97.8 346.8L82.7 345.2L71.4 343.6L64.9 342.5L60.2 341.5L49.8 339.0L45.1 337.5L37.6 334.7L33.8 332.9L29.8 330.9L23.9 327.1L19.1 323.4L15.2 319.6L12.0 315.8L9.3 312.1L7.0 308.3L3.8 302.0L0.0 292.0L0.0 376.0L0.9 376.0ZM340.3 125.0L376.0 125.9L376.0 0.0L215.4 0.0L216.4 22.6L217.9 41.4L219.9 56.4L222.2 67.7L225.6 78.8L229.4 87.2L233.5 94.0L236.5 97.8L240.1 101.5L244.4 105.2L248.2 107.8L255.7 111.8L264.1 115.1L274.5 118.1L285.8 120.4L300.8 122.4L319.6 124.0L340.3 125.0Z" fill="#e94d4d"/>
<path d="M0.9 376.0L376.0 376.0L376.0 351.0L229.4 350.8L191.8 350.5L165.4 350.1L127.8 348.8L95.9 347.1L88.4 346.3L65.4 343.1L47.9 338.9L39.5 335.9L36.7 334.8L29.1 331.1L22.6 326.9L18.2 323.4L14.4 319.6L11.2 315.8L8.5 312.1L6.6 308.9L3.8 303.5L0.0 294.0L0.0 376.0L0.9 376.0ZM353.4 120.3L376.0 120.9L376.0 0.0L221.4 0.0L222.3 18.8L223.9 37.6L225.9 52.6L228.4 63.9L229.7 68.6L232.0 75.2L235.5 82.7L237.6 86.5L240.6 90.7L243.4 94.0L247.3 97.8L251.9 101.4L255.0 103.4L258.5 105.4L263.2 107.6L270.7 110.4L282.0 113.5L297.0 116.2L312.1 117.9L330.9 119.3L353.4 120.3Z" fill="#de4d4d"/>
<path d="M0.9 376.0L376.0 376.0L376.0 351.4L225.6 351.2L188.0 351.0L161.7 350.6L124.1 349.0L93.1 347.3L86.5 346.7L63.9 343.4L47.0 339.2L36.7 335.4L28.2 331.2L21.9 327.1L17.9 323.9L14.1 320.2L10.5 315.8L7.8 312.1L3.6 304.6L0.0 295.8L0.0 376.0L0.9 376.0ZM349.7 114.7L376.0 115.5L376.0 0.0L227.7 0.0L228.8 18.8L230.1 33.8L232.4 48.9L234.9 60.2L236.9 66.6L238.7 71.4L242.4 79.0L244.7 82.7L247.5 86.5L251.9 91.2L255.1 94.0L259.4 97.1L267.0 101.3L277.1 105.3L285.8 107.7L297.0 110.0L312.1 112.1L327.1 113.5L349.7 114.7Z" fill="#d24d4d"/>
<path d="M0.9 376.0L376.0 376.0L376.0 351.8L229.4 351.7L165.4 351.2L140.1 350.4L130.2 349.7L92.1 347.7L83.7 346.9L78.9 345.9L61.1 343.4L56.9 342.2L46.1 339.6L35.4 335.6L27.9 331.8L21.6 327.6L17.4 324.3L13.5 320.5L10.3 316.8L6.6 311.4L3.3 305.5L0.0 297.6L0.0 376.0L0.9 376.0ZM353.4 109.1L376.0 109.8L376.0 0.0L234.4 0.0L235.7 18.8L237.3 33.8L239.2 45.1L241.9 56.4L244.4 64.0L246.3 68.4L248.8 73.3L252.9 79.5L255.7 82.9L259.3 86.5L263.2 89.7L267.0 92.2L270.7 94.4L274.5 96.2L282.0 99.2L293.3 102.4L304.6 104.7L319.6 106.7L334.6 108.0L353.4 109.1Z" fill="#c74d4d"/>
<path d="M0.9 376.0L376.0 376.0L376.0 352.2L221.8 352.1L158.9 351.7L135.4 351.0L127.8 350.4L121.9 349.7L105.3 348.7L90.2 348.1L81.8 347.4L78.9 346.9L75.9 345.9L67.7 344.7L59.2 343.7L56.9 343.1L55.0 342.2L45.1 340.0L43.2 339.3L41.9 338.4L37.6 336.8L34.8 336.1L30.8 333.7L27.3 332.3L25.6 330.9L21.0 328.1L18.8 326.1L16.9 324.9L15.0 322.8L13.4 321.5L11.3 318.7L10.1 317.7L7.6 314.0L6.6 312.7L3.8 307.5L2.8 306.2L0.0 299.2L0.0 376.0L0.9 376.0ZM365.7 103.4L376.0 103.8L376.0 0.0L241.6 0.0L242.7 15.0L244.4 30.1L246.4 41.4L249.3 52.6L252.1 60.2L253.8 63.9L256.6 69.0L261.0 75.2L264.4 79.0L267.9 82.1L274.5 86.8L282.0 90.7L292.3 94.5L304.6 97.5L315.8 99.5L330.9 101.3L345.9 102.4L365.7 103.4Z" fill="#bc4d4d"/>
<path d="M0.9 376.0L376.0 376.0L376.0 352.6L214.3 352.5L150.4 352.1L127.8 351.4L120.3 350.7L114.8 349.7L101.5 348.9L86.5 348.5L79.0 347.8L75.2 346.9L73.2 345.9L67.7 345.1L61.1 344.7L57.3 344.1L54.5 343.2L53.2 342.2L48.9 341.2L45.1 340.7L43.3 340.3L41.4 339.3L40.5 338.4L37.6 337.3L33.8 336.5L32.2 335.6L31.5 334.6L30.1 333.9L28.2 333.5L26.3 332.6L25.4 332.0L24.6 330.9L22.6 329.6L20.7 328.8L18.8 326.8L17.4 326.2L16.1 325.2L14.6 323.4L13.2 322.4L12.3 321.5L11.3 319.7L9.4 318.2L8.2 315.8L7.5 314.8L6.4 314.0L3.8 309.0L2.4 307.4L0.0 300.9L0.0 376.0L0.9 376.0ZM364.7 96.8L376.0 97.3L376.0 0.0L249.2 0.0L250.6 15.0L252.1 26.3L254.3 37.6L255.7 43.2L257.4 48.9L260.5 56.4L262.3 60.2L264.6 63.9L267.2 67.7L269.8 70.7L274.5 75.3L278.2 78.2L282.0 80.7L285.7 82.7L289.5 84.5L297.0 87.4L307.1 90.2L319.6 92.7L330.9 94.2L345.9 95.7L364.7 96.8Z" fill="#b14d4d"/>
<path d="M0.9 376.0L376.0 376.0L376.0 353.0L199.3 353.0L138.2 352.7L124.1 352.3L116.6 351.8L111.9 351.0L108.7 349.7L101.5 349.3L83.7 349.0L76.1 348.5L72.4 347.5L71.3 346.9L70.4 345.9L67.7 345.5L60.2 345.3L55.5 344.8L53.2 344.0L51.8 343.1L51.1 342.2L48.9 341.7L42.3 341.0L40.4 340.3L39.5 339.3L39.0 338.4L37.6 337.9L32.9 337.2L31.5 336.5L30.7 335.6L30.3 334.6L25.4 333.3L24.4 332.6L23.6 330.9L22.6 330.2L19.7 329.4L17.4 327.1L16.0 326.4L14.1 324.9L11.3 321.6L9.9 320.5L8.5 318.6L7.5 315.9L5.6 314.8L5.1 314.0L4.6 312.1L3.8 310.5L2.8 310.0L1.9 309.0L1.2 307.4L0.7 304.6L0.0 302.7L0.0 376.0L0.9 376.0ZM375.1 90.3L376.0 90.3L376.0 0.0L257.5 0.0L259.2 15.0L261.0 26.3L263.2 35.6L266.3 45.1L269.7 52.6L271.8 56.4L274.4 60.2L279.3 65.8L282.0 68.4L285.8 71.4L293.3 75.9L300.8 79.3L311.1 82.6L319.6 84.6L330.4 86.5L342.2 87.9L357.2 89.2L375.1 90.3Z" fill="#b14d4d"/>
</g>
<g fill="none" stroke-width="0.75" stroke-opacity="0.8">
<path d="M376.0 311.1L312.1 310.8L263.2 310.3L225.6 309.5L195.4 308.3L176.7 306.6L160.2 304.6L145.6 300.8L139.6 297.0L139.6 293.3L142.9 291.3L146.5 289.5L154.2 287.8L165.4 285.9L180.5 284.6L195.5 283.7L210.6 283.1L248.2 282.2L297.0 281.7L376.0 281.4" stroke="#0000af"/>
<path d="M376.0 321.2L270.7 320.9L236.9 320.6L206.8 320.1L188.5 319.6L169.2 318.7L150.4 317.4L133.9 315.8L124.1 314.3L112.1 312.1L99.5 308.3L91.3 304.6L85.7 300.8L81.9 297.0L79.5 293.3L78.2 289.5L77.9 285.8L78.8 282.0L81.0 278.2L82.7 276.5L85.2 274.5L86.5 273.7L90.2 271.9L93.3 270.7L97.8 269.5L105.3 268.2L116.6 266.9L127.8 266.3L139.1 265.9L180.5 265.3L259.4 264.8L376.0 264.6" stroke="#0000ff"/>
<path d="M376.0 327.5L248.4 327.1L214.3 326.7L188.0 326.2L157.9 325.0L135.4 323.6L120.3 322.1L105.3 319.9L97.8 318.3L88.3 315.8L79.0 312.4L70.9 308.3L65.6 304.6L61.5 300.8L58.5 297.0L56.1 293.3L54.3 289.5L52.9 285.8L52.0 282.0L51.5 278.2L51.2 274.5L51.2 270.7L51.5 267.0L52.0 263.2L52.6 260.2L54.1 255.7L56.4 251.0L58.6 248.2L60.2 246.5L63.5 244.4L67.7 243.0L71.4 242.6L75.2 242.6L79.0 242.8L105.3 246.2L124.1 248.1L142.9 249.3L165.4 250.1L191.8 250.6L229.4 250.9L376.0 250.9" stroke="#0060ff"/>
<path d="M376.0 332.0L263.2 331.7L199.3 331.2L180.5 330.8L157.9 330.0L139.1 329.0L124.1 327.9L115.3 327.1L109.0 326.3L94.0 323.9L86.5 322.3L76.7 319.6L67.0 315.8L60.2 312.2L54.6 308.3L50.4 304.6L47.1 300.8L44.4 297.0L41.4 291.4L39.1 285.8L37.6 281.1L36.1 274.5L34.9 267.0L33.7 255.7L32.6 233.1L30.3 165.4L29.8 146.6L28.9 82.7L28.5 0.0M66.2 0.0L66.2 71.4L66.6 112.8L67.0 127.8L67.7 142.9L68.6 154.2L69.8 165.4L71.8 176.7L73.5 184.2L76.0 191.8L77.5 195.5L79.3 199.3L81.4 203.0L83.9 206.8L86.9 210.6L90.6 214.3L95.1 218.1L101.0 221.8L105.3 224.0L108.8 225.6L112.8 227.1L120.3 229.5L127.8 231.3L139.1 233.3L150.4 234.7L165.4 236.1L176.7 236.7L191.8 237.4L229.4 238.2L282.0 238.5L376.0 238.6" stroke="#00bfff"/>
<path d="M376.0 335.7L259.4 335.5L195.5 334.9L176.7 334.6L154.2 333.9L135.4 332.9L120.3 331.9L109.0 330.9L97.8 329.4L90.2 328.2L82.7 326.7L70.0 323.4L60.1 319.6L52.9 315.8L47.4 312.1L43.0 308.3L39.5 304.6L37.6 302.1L34.3 297.0L32.3 293.3L30.6 289.5L28.0 282.0L26.0 274.5L23.9 263.2L22.3 251.9L20.8 236.9L19.4 218.1L18.5 203.0L17.6 180.5L16.8 154.2L16.4 127.8L16.0 94.0L15.6 0.0M88.8 0.0L89.0 63.9L89.6 101.5L90.1 116.6L90.7 127.8L91.5 139.1L92.7 150.4L94.5 161.7L96.1 169.2L98.3 176.7L99.6 180.5L101.2 184.2L103.0 188.0L105.1 191.8L107.7 195.5L110.8 199.3L114.7 203.0L116.6 204.6L120.3 207.4L124.1 209.7L127.8 211.6L131.6 213.3L135.4 214.7L142.9 217.1L150.4 218.9L157.9 220.3L169.2 221.9L180.5 223.0L191.8 223.9L206.8 224.7L225.6 225.3L244.4 225.7L293.3 226.1L376.0 226.2" stroke="#10ffef"/>
<path d="M376.0 338.9L259.4 338.7L195.5 338.2L169.2 337.7L146.6 337.0L127.8 336.0L112.8 335.0L97.8 333.3L82.7 331.0L75.2 329.4L66.3 327.1L55.9 323.4L48.9 319.9L42.4 315.8L37.8 312.1L33.8 308.1L31.0 304.6L28.5 300.8L26.3 297.0L24.5 293.3L22.9 289.5L21.6 285.8L18.8 276.0L16.3 263.2L14.6 251.9L13.0 236.9L11.4 218.1L10.6 203.0L9.7 180.5L9.1 157.9L8.7 131.6L8.3 97.8L8.0 0.0M107.4 0.0L107.7 52.6L108.4 90.2L109.0 105.3L109.6 116.6L110.5 127.8L111.8 139.1L113.7 150.4L115.5 157.9L117.8 165.4L120.3 171.7L122.9 176.7L124.1 178.7L127.8 184.0L131.4 188.0L135.7 191.8L141.1 195.5L146.6 198.6L150.4 200.2L154.2 201.7L161.7 204.1L169.2 205.9L176.7 207.3L188.0 209.0L199.3 210.1L210.6 211.0L225.6 211.8L240.6 212.3L259.4 212.8L304.6 213.3L376.0 213.4" stroke="#70ff8f"/>
<path d="M376.0 341.7L263.2 341.6L199.3 341.1L173.0 340.7L150.4 340.1L131.6 339.3L115.9 338.4L101.5 337.1L86.5 335.2L82.6 334.6L75.2 333.2L65.1 330.9L53.6 327.1L45.3 323.4L39.1 319.6L33.8 315.6L30.1 312.1L26.8 308.3L24.1 304.6L21.8 300.8L19.8 297.0L18.1 293.3L16.7 289.5L14.3 282.0L11.3 269.5L9.1 255.7L7.5 243.6L6.0 225.6L4.8 206.8L3.8 184.2L3.3 165.4L2.9 139.1L2.6 105.3L2.3 0.0M125.6 0.0L125.9 48.9L126.3 67.7L126.8 82.7L127.5 97.8L128.3 109.0L129.4 120.3L130.5 127.8L131.8 135.4L133.5 142.9L135.7 150.4L138.7 157.9L140.6 161.7L142.7 165.4L145.4 169.2L148.6 173.0L150.4 174.8L154.2 178.1L157.9 180.8L163.9 184.2L169.2 186.6L173.0 188.1L176.7 189.3L184.2 191.4L191.8 193.0L203.0 194.8L214.3 196.1L225.6 197.1L240.6 197.9L270.7 199.0L312.1 199.5L376.0 199.8" stroke="#bfff40"/>
<path d="M376.0 344.2L274.5 344.1L214.3 343.8L169.2 343.2L135.4 342.2L120.3 341.4L109.0 340.6L97.8 339.6L87.0 338.4L75.2 336.5L66.1 334.6L60.2 333.1L53.0 330.9L45.1 327.7L41.4 325.8L36.9 323.4L31.5 319.6L30.1 318.4L26.3 315.0L23.7 312.1L20.7 308.3L18.2 304.6L16.1 300.8L14.3 297.0L11.3 289.5L9.1 282.0L7.2 274.5L5.1 263.2L3.8 254.0L2.3 240.6L1.0 225.6L0.0 209.2M144.5 0.0L145.0 45.1L145.4 60.2L146.0 75.2L146.6 86.5L147.6 97.8L148.9 109.0L150.0 116.6L151.5 124.1L153.5 131.6L156.1 139.1L157.9 143.4L159.6 146.6L161.7 150.2L164.4 154.2L167.6 157.9L169.2 159.5L173.0 162.8L176.7 165.6L183.0 169.2L188.0 171.5L191.8 173.0L195.5 174.2L203.0 176.3L210.6 177.9L218.1 179.2L229.4 180.7L240.6 181.8L251.9 182.6L267.0 183.3L282.0 183.8L319.6 184.5L376.0 184.8" stroke="#ffef00"/>
<path d="M376.0 346.6L221.8 346.3L179.0 345.9L150.4 345.3L120.3 344.0L97.8 342.4L90.2 341.6L79.0 340.1L68.8 338.4L63.9 337.3L53.5 334.6L48.9 333.0L43.2 330.9L35.5 327.1L30.1 323.7L26.3 320.8L22.6 317.4L18.8 313.2L15.2 308.3L12.9 304.6L10.9 300.8L7.5 292.6L5.4 285.8L3.4 278.2L1.9 270.7L0.0 259.6M166.3 0.0L166.9 37.6L167.5 52.6L168.0 63.9L168.9 75.2L169.6 82.7L171.0 94.0L172.3 101.5L174.0 109.0L176.1 116.6L177.5 120.3L179.0 124.1L180.8 127.8L184.2 133.6L188.0 138.5L191.8 142.4L195.5 145.6L199.3 148.3L202.8 150.4L206.8 152.4L210.8 154.2L218.1 156.7L225.6 158.7L233.1 160.3L240.6 161.6L248.2 162.6L255.7 163.4L267.0 164.4L278.2 165.1L293.3 165.8L327.1 166.6L376.0 167.0" stroke="#ff8f00"/>
<path d="M376.0 348.8L229.4 348.5L188.0 348.2L154.2 347.6L127.8 346.7L109.0 345.8L97.8 344.8L86.5 343.7L75.2 342.2L71.4 341.6L63.9 340.2L56.0 338.4L48.9 336.3L43.9 334.6L37.6 332.0L33.8 330.1L28.7 327.1L22.6 322.6L19.2 319.6L15.0 314.9L11.3 309.7L8.3 304.6L6.5 300.8L3.8 294.0L2.3 289.5L0.0 281.1M191.3 0.0L192.1 30.1L192.7 41.4L193.5 52.6L194.6 63.9L195.5 71.4L196.7 79.0L198.3 86.5L199.3 90.3L201.6 97.8L203.0 101.5L204.7 105.3L206.7 109.0L209.0 112.8L211.8 116.6L215.2 120.3L219.3 124.1L224.6 127.8L229.4 130.5L233.1 132.3L240.6 135.2L244.4 136.4L251.9 138.4L259.4 139.9L267.0 141.1L274.5 142.1L285.8 143.2L297.0 144.0L308.3 144.7L338.4 145.7L376.0 146.2" stroke="#ff3000"/>
<path d="M376.0 351.1L229.4 350.9L191.8 350.7L165.4 350.2L127.8 348.9L94.0 347.0L86.5 346.2L63.9 343.0L48.9 339.3L45.1 338.1L37.6 335.3L33.8 333.6L28.5 330.9L22.6 327.1L18.0 323.4L14.2 319.6L11.0 315.8L8.4 312.1L6.1 308.3L3.8 303.8L2.4 300.8L0.0 294.5M222.9 0.0L223.9 18.8L224.7 30.1L225.5 37.6L226.5 45.1L227.7 52.6L229.3 60.2L230.2 63.9L231.3 67.7L233.1 73.0L235.7 79.0L237.7 82.7L240.0 86.5L242.8 90.2L246.1 94.0L250.3 97.8L255.5 101.5L259.4 103.8L263.2 105.7L267.0 107.2L271.9 109.0L278.2 110.9L285.8 112.7L293.3 114.1L300.8 115.2L308.3 116.1L315.8 116.9L327.1 117.7L349.7 118.8L376.0 119.6" stroke="#cf0000"/>
<path d="M376.0 353.4L105.3 353.4L101.5 349.7L71.4 349.7L67.7 345.9L52.6 345.9L48.9 342.2L41.4 342.2L37.6 338.4L30.1 338.4L22.6 330.9L18.8 330.9L3.8 315.8L3.8 312.1L0.0 308.3L0.0 304.6M266.9 0.0L267.0 1.4L269.4 3.8L270.6 7.5L270.7 22.8L274.2 26.3L274.5 36.7L275.4 37.6L278.2 41.4L278.2 45.2L285.6 52.6L285.7 56.4L289.5 60.2L293.3 60.4L300.8 67.7L304.6 67.7L308.3 71.5L315.8 71.5L319.5 75.2L334.6 75.4L338.2 79.0L338.4 79.0L372.2 79.2L376.0 82.0" stroke="#800000" stroke-width="1" stroke-opacity="0.9"/>
</g>
<g fill="none" stroke="#000" stroke-opacity="0.07" stroke-width="0.7">
<path d="M94.0 0V376 M0 282.0H376"/>
<path d="M188.0 0V376 M0 188.0H376"/>
<path d="M282.0 0V376 M0 94.0H376"/>
</g>
<g fill="none" stroke="#300" stroke-opacity="0.38" stroke-width="0.8">
<path d="M0.3 0V375.7H376"/>
<path d="M94.0 376V372.5 M0 282.0H3.5"/>
<path d="M188.0 376V372.5 M0 188.0H3.5"/>
<path d="M282.0 376V372.5 M0 94.0H3.5"/>
</g>
<g fill="#000">
<circle cx="44.9" cy="2.0" r="3.7"/>
<circle cx="45.3" cy="5.0" r="3.7"/>
<circle cx="45.0" cy="11.7" r="3.7"/>
<circle cx="44.8" cy="18.7" r="3.7"/>
<circle cx="45.4" cy="25.7" r="3.7"/>
<circle cx="45.6" cy="31.7" r="3.7"/>
<circle cx="45.1" cy="37.0" r="3.7"/>
<circle cx="45.3" cy="41.3" r="3.7"/>
<circle cx="45.9" cy="45.3" r="3.7"/>
<circle cx="45.8" cy="48.8" r="3.7"/>
<circle cx="45.4" cy="51.2" r="3.7"/>
<circle cx="45.7" cy="52.4" r="3.7"/>
</g>
</svg>
<div class="abs tick" style="right:479.7px;top:46px;text-align:right">2.5</div>
<div class="abs tick" style="right:479.7px;top:140px;text-align:right">2</div>
<div class="abs tick" style="right:479.7px;top:234px;text-align:right">1.5</div>
<div class="abs tick" style="right:479.7px;top:328px;text-align:right">1</div>
<div class="abs tick" style="right:479.7px;top:422px;text-align:right">0.5</div>
<div class="abs tick c" style="left:309.5px;top:430.9px;width:30px">0.5</div>
<div class="abs tick c" style="left:403.5px;top:430.9px;width:30px">1</div>
<div class="abs tick c" style="left:497.5px;top:430.9px;width:30px">1.5</div>
<div class="abs tick c" style="left:591.5px;top:430.9px;width:30px">2</div>
<div class="abs tick c" style="left:685.5px;top:430.9px;width:30px">2.5</div>
<div class="abs axl c" style="left:412.3px;top:441.7px;width:200px">A-B bond distance (Å)</div>
<div class="abs axl c" style="left:198.2px;top:231.9px;width:200px;transform:rotate(-90deg);transform-origin:50% 50%">B-C bond distance (Å)</div>

</body></html>
